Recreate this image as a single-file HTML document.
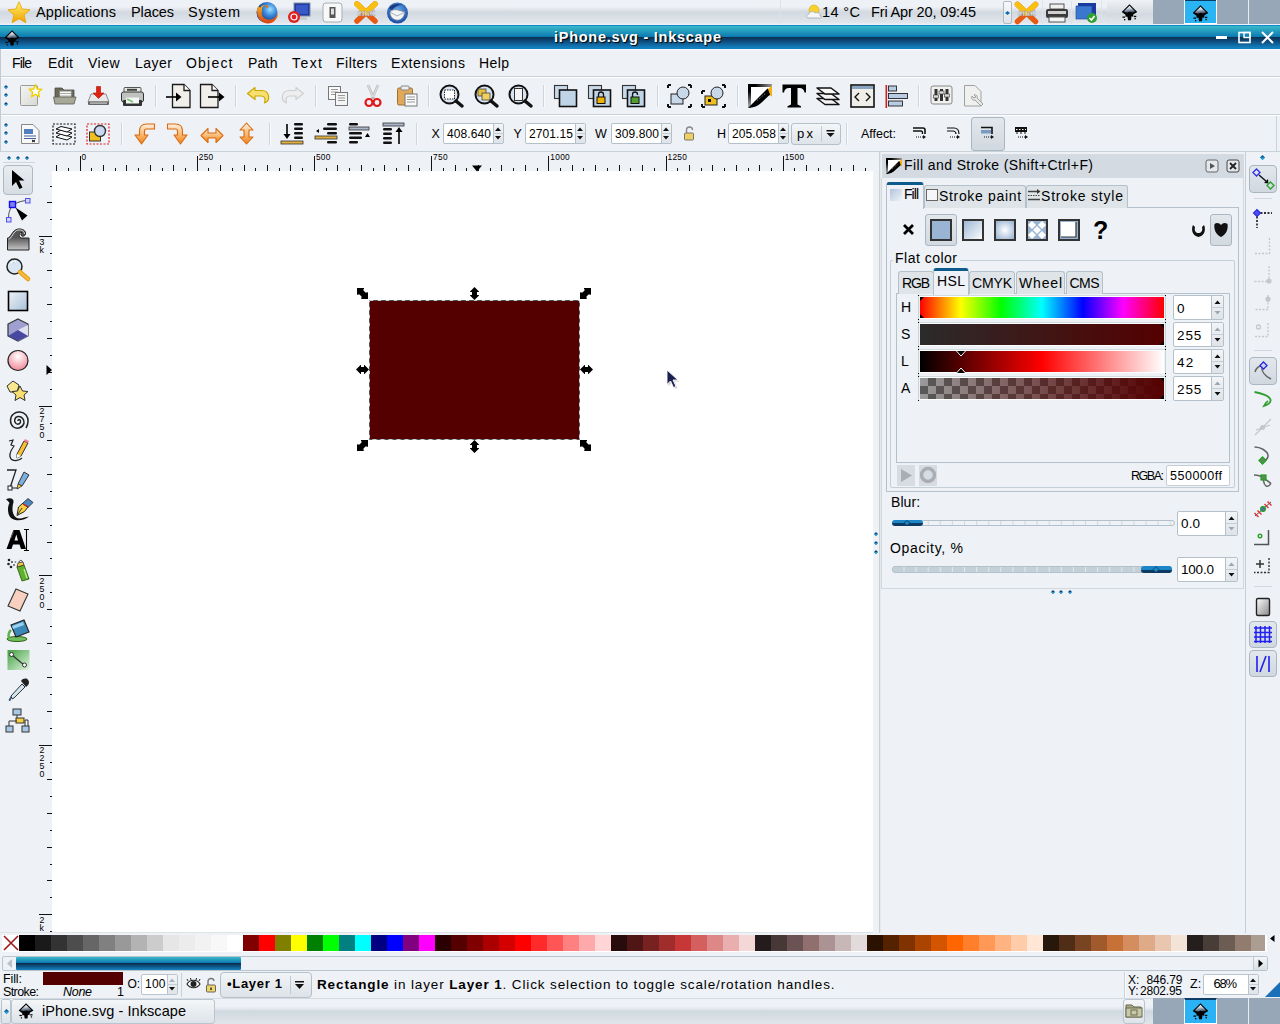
<!DOCTYPE html><html><head><meta charset="utf-8"><style>
html,body{margin:0;padding:0;width:1280px;height:1024px;overflow:hidden;background:#eef1f6}
.t{position:absolute;white-space:nowrap;font-family:"Liberation Sans",sans-serif}
svg{overflow:visible}
</style></head><body>
<div style="position:absolute;left:0;top:0;width:1280px;height:25px;background:linear-gradient(#eef1f6 0px,#eef1f6 7px,#d3d9e0 12px,#d6dce3 15px,#e0e6ec 23px,#eef1f6 24px,#eef1f6 25px)"></div>
<div style="position:absolute;left:0;top:25px;width:1280px;height:24px;background:linear-gradient(#1288cc 0px,#1288cc 1px,#3ab9c9 1px,#0b78b0 12px,#0a3050 12px,#0d4a7a 16px,#1482c2 23px,#0a7cc0 24px)"></div>
<div style="position:absolute;left:0;top:49px;width:1280px;height:27px;background:#eef1f6;border-top:1px solid #fbfbfb;box-sizing:border-box"></div>
<div style="position:absolute;left:0px;top:76px;width:1280px;height:1px;background:#c9d1d9"></div>
<div style="position:absolute;left:0px;top:77px;width:1280px;height:1px;background:#fff"></div>
<div style="position:absolute;left:0px;top:78px;width:1280px;height:36px;background:#eef1f6"></div>
<div style="position:absolute;left:0px;top:114px;width:1280px;height:1px;background:#c9d1d9"></div>
<div style="position:absolute;left:0px;top:115px;width:1280px;height:1px;background:#fff"></div>
<div style="position:absolute;left:0px;top:116px;width:1280px;height:36px;background:#eef1f6"></div>
<div style="position:absolute;left:0px;top:151px;width:1280px;height:1px;background:#c9d1d9"></div>
<div style="position:absolute;left:0px;top:49px;width:1px;height:950px;background:#c5cbd3"></div>
<div style="position:absolute;left:0px;top:152px;width:1280px;height:781px;background:#eef1f6"></div>
<div style="position:absolute;left:52px;top:171px;width:821px;height:762px;background:#fff"></div>
<div style="position:absolute;left:0px;top:933px;width:1280px;height:20px;background:#eef1f6"></div>
<div style="position:absolute;left:2px;top:935px;width:1265px;height:17px;background:#fff"></div>
<div style="position:absolute;left:0px;top:932px;width:1280px;height:1px;background:#dde4e8"></div>
<div style="position:absolute;left:19px;top:935px;width:16px;height:16px;background:#000000"></div>
<div style="position:absolute;left:35px;top:935px;width:16px;height:16px;background:#1a1a1a"></div>
<div style="position:absolute;left:51px;top:935px;width:16px;height:16px;background:#333333"></div>
<div style="position:absolute;left:67px;top:935px;width:16px;height:16px;background:#4d4d4d"></div>
<div style="position:absolute;left:83px;top:935px;width:16px;height:16px;background:#666666"></div>
<div style="position:absolute;left:99px;top:935px;width:16px;height:16px;background:#808080"></div>
<div style="position:absolute;left:115px;top:935px;width:16px;height:16px;background:#999999"></div>
<div style="position:absolute;left:131px;top:935px;width:16px;height:16px;background:#b3b3b3"></div>
<div style="position:absolute;left:147px;top:935px;width:16px;height:16px;background:#cccccc"></div>
<div style="position:absolute;left:163px;top:935px;width:16px;height:16px;background:#e6e6e6"></div>
<div style="position:absolute;left:179px;top:935px;width:16px;height:16px;background:#ececec"></div>
<div style="position:absolute;left:195px;top:935px;width:16px;height:16px;background:#f2f2f2"></div>
<div style="position:absolute;left:211px;top:935px;width:16px;height:16px;background:#f8f8f8"></div>
<div style="position:absolute;left:227px;top:935px;width:16px;height:16px;background:#ffffff"></div>
<div style="position:absolute;left:243px;top:935px;width:16px;height:16px;background:#800000"></div>
<div style="position:absolute;left:259px;top:935px;width:16px;height:16px;background:#ff0000"></div>
<div style="position:absolute;left:275px;top:935px;width:16px;height:16px;background:#808000"></div>
<div style="position:absolute;left:291px;top:935px;width:16px;height:16px;background:#ffff00"></div>
<div style="position:absolute;left:307px;top:935px;width:16px;height:16px;background:#008000"></div>
<div style="position:absolute;left:323px;top:935px;width:16px;height:16px;background:#00ff00"></div>
<div style="position:absolute;left:339px;top:935px;width:16px;height:16px;background:#008080"></div>
<div style="position:absolute;left:355px;top:935px;width:16px;height:16px;background:#00ffff"></div>
<div style="position:absolute;left:371px;top:935px;width:16px;height:16px;background:#000080"></div>
<div style="position:absolute;left:387px;top:935px;width:16px;height:16px;background:#0000ff"></div>
<div style="position:absolute;left:403px;top:935px;width:16px;height:16px;background:#800080"></div>
<div style="position:absolute;left:419px;top:935px;width:16px;height:16px;background:#ff00ff"></div>
<div style="position:absolute;left:435px;top:935px;width:16px;height:16px;background:#2b0000"></div>
<div style="position:absolute;left:451px;top:935px;width:16px;height:16px;background:#550000"></div>
<div style="position:absolute;left:467px;top:935px;width:16px;height:16px;background:#800000"></div>
<div style="position:absolute;left:483px;top:935px;width:16px;height:16px;background:#aa0000"></div>
<div style="position:absolute;left:499px;top:935px;width:16px;height:16px;background:#d40000"></div>
<div style="position:absolute;left:515px;top:935px;width:16px;height:16px;background:#ff0000"></div>
<div style="position:absolute;left:531px;top:935px;width:16px;height:16px;background:#ff2a2a"></div>
<div style="position:absolute;left:547px;top:935px;width:16px;height:16px;background:#ff5555"></div>
<div style="position:absolute;left:563px;top:935px;width:16px;height:16px;background:#ff8080"></div>
<div style="position:absolute;left:579px;top:935px;width:16px;height:16px;background:#ffaaaa"></div>
<div style="position:absolute;left:595px;top:935px;width:16px;height:16px;background:#ffd5d5"></div>
<div style="position:absolute;left:611px;top:935px;width:16px;height:16px;background:#280b0b"></div>
<div style="position:absolute;left:627px;top:935px;width:16px;height:16px;background:#501616"></div>
<div style="position:absolute;left:643px;top:935px;width:16px;height:16px;background:#782121"></div>
<div style="position:absolute;left:659px;top:935px;width:16px;height:16px;background:#a02c2c"></div>
<div style="position:absolute;left:675px;top:935px;width:16px;height:16px;background:#c83737"></div>
<div style="position:absolute;left:691px;top:935px;width:16px;height:16px;background:#d35f5f"></div>
<div style="position:absolute;left:707px;top:935px;width:16px;height:16px;background:#de8787"></div>
<div style="position:absolute;left:723px;top:935px;width:16px;height:16px;background:#e9afaf"></div>
<div style="position:absolute;left:739px;top:935px;width:16px;height:16px;background:#f4d7d7"></div>
<div style="position:absolute;left:755px;top:935px;width:16px;height:16px;background:#241c1c"></div>
<div style="position:absolute;left:771px;top:935px;width:16px;height:16px;background:#483737"></div>
<div style="position:absolute;left:787px;top:935px;width:16px;height:16px;background:#6c5353"></div>
<div style="position:absolute;left:803px;top:935px;width:16px;height:16px;background:#916f6f"></div>
<div style="position:absolute;left:819px;top:935px;width:16px;height:16px;background:#ac9393"></div>
<div style="position:absolute;left:835px;top:935px;width:16px;height:16px;background:#c8b7b7"></div>
<div style="position:absolute;left:851px;top:935px;width:16px;height:16px;background:#e3dbdb"></div>
<div style="position:absolute;left:867px;top:935px;width:16px;height:16px;background:#2b1100"></div>
<div style="position:absolute;left:883px;top:935px;width:16px;height:16px;background:#552200"></div>
<div style="position:absolute;left:899px;top:935px;width:16px;height:16px;background:#803300"></div>
<div style="position:absolute;left:915px;top:935px;width:16px;height:16px;background:#aa4400"></div>
<div style="position:absolute;left:931px;top:935px;width:16px;height:16px;background:#d45500"></div>
<div style="position:absolute;left:947px;top:935px;width:16px;height:16px;background:#ff6600"></div>
<div style="position:absolute;left:963px;top:935px;width:16px;height:16px;background:#ff7f2a"></div>
<div style="position:absolute;left:979px;top:935px;width:16px;height:16px;background:#ff9955"></div>
<div style="position:absolute;left:995px;top:935px;width:16px;height:16px;background:#ffb380"></div>
<div style="position:absolute;left:1011px;top:935px;width:16px;height:16px;background:#ffccaa"></div>
<div style="position:absolute;left:1027px;top:935px;width:16px;height:16px;background:#ffe6d5"></div>
<div style="position:absolute;left:1043px;top:935px;width:16px;height:16px;background:#28170b"></div>
<div style="position:absolute;left:1059px;top:935px;width:16px;height:16px;background:#502d16"></div>
<div style="position:absolute;left:1075px;top:935px;width:16px;height:16px;background:#784421"></div>
<div style="position:absolute;left:1091px;top:935px;width:16px;height:16px;background:#a05a2c"></div>
<div style="position:absolute;left:1107px;top:935px;width:16px;height:16px;background:#c87137"></div>
<div style="position:absolute;left:1123px;top:935px;width:16px;height:16px;background:#d38d5f"></div>
<div style="position:absolute;left:1139px;top:935px;width:16px;height:16px;background:#deaa87"></div>
<div style="position:absolute;left:1155px;top:935px;width:16px;height:16px;background:#e9c6af"></div>
<div style="position:absolute;left:1171px;top:935px;width:16px;height:16px;background:#f4e3d7"></div>
<div style="position:absolute;left:1187px;top:935px;width:16px;height:16px;background:#241f1c"></div>
<div style="position:absolute;left:1203px;top:935px;width:16px;height:16px;background:#483e37"></div>
<div style="position:absolute;left:1219px;top:935px;width:16px;height:16px;background:#6c5d53"></div>
<div style="position:absolute;left:1235px;top:935px;width:16px;height:16px;background:#917c6f"></div>
<div style="position:absolute;left:1251px;top:935px;width:14px;height:16px;background:#ac9d93"></div>
<svg style="position:absolute;left:3px;top:935px;" width="16" height="16" viewBox="0 0 16 16"><rect width="16" height="16" fill="#fff"/><path d="M1 1L15 15M15 1L1 15" stroke="#a01818" stroke-width="1.6"/></svg>
<svg style="position:absolute;left:1269px;top:934px;" width="8" height="10" viewBox="0 0 8 10"><path d="M5.5 1L1 4.5L5.5 8Z" fill="#000"/></svg>
<div style="position:absolute;left:0px;top:952px;width:1280px;height:19px;background:#eef1f6"></div>
<div style="position:absolute;left:2px;top:956px;width:1266px;height:15px;background:#eef1f6;border:1px solid #b9c5ce;box-sizing:border-box;border-radius:2px"></div>
<div style="position:absolute;left:16px;top:957px;width:225px;height:13px;background:linear-gradient(#3ab9c9,#0b78b0 45%,#0a3050 50%,#1482c2 100%);border-radius:1px"></div>
<svg style="position:absolute;left:4px;top:958px;" width="10" height="11" viewBox="0 0 10 11"><path d="M8 1L3 5.5L8 10Z" fill="#b8c2cc"/></svg>
<div style="position:absolute;left:1253px;top:957px;width:14px;height:13px;background:linear-gradient(#f4f6f8,#d8dfe5);border-left:1px solid #c0ccd4;box-sizing:border-box"></div>
<svg style="position:absolute;left:1256px;top:958px;" width="10" height="11" viewBox="0 0 10 11"><path d="M2.5 1.5L7 5.5L2.5 9.5Z" fill="#000"/></svg>
<div style="position:absolute;left:0px;top:971px;width:1280px;height:27px;background:#eef1f6"></div>
<div class="t" style="left:3.00px;top:972px;font-size:12.5px;letter-spacing:-0.109px;font-weight:normal;font-style:normal;color:#000;font-family:'Liberation Sans', sans-serif;">Fill:</div>
<div class="t" style="left:3.00px;top:985px;font-size:12.5px;letter-spacing:-0.604px;font-weight:normal;font-style:normal;color:#000;font-family:'Liberation Sans', sans-serif;">Stroke:</div>
<div style="position:absolute;left:43px;top:972px;width:80px;height:13px;background:#550000"></div>
<div class="t" style="left:63.00px;top:985px;font-size:12.5px;letter-spacing:-0.292px;font-weight:normal;font-style:italic;color:#000;font-family:'Liberation Sans', sans-serif;">None</div>
<div class="t" style="left:117.00px;top:985px;font-size:12.5px;letter-spacing:0.000px;font-weight:normal;font-style:normal;color:#000;font-family:'Liberation Sans', sans-serif;">1</div>
<div class="t" style="left:127.50px;top:977px;font-size:12px;letter-spacing:0.000px;font-weight:normal;font-style:normal;color:#000;font-family:'Liberation Sans', sans-serif;">O:</div>
<div style="position:absolute;left:141px;top:974px;width:37px;height:21px;background:#fff;border:1px solid #b9c5ce;box-sizing:border-box;border-radius:2px"></div>
<div style="position:absolute;left:167px;top:975px;width:10px;height:19px;background:linear-gradient(#f2f4f6,#dfe4e9);border-left:1px solid #b9c5ce;box-sizing:border-box"></div>
<svg style="position:absolute;left:167px;top:975px;" width="10" height="19" viewBox="0 0 10 19"><path d="M2 7L5 3.5L8 7Z" fill="#a8b4be"/><path d="M2 12L5 15.5L8 12Z" fill="#111"/><path d="M0 9.5H10" stroke="#c4ced6"/></svg>
<div class="t" style="left:145.00px;top:977px;font-size:12px;letter-spacing:0.230px;font-weight:normal;font-style:normal;color:#000;font-family:'Liberation Sans', sans-serif;">100</div>
<div style="position:absolute;left:181px;top:973px;width:1px;height:24px;background:#c9d1d9"></div>
<svg style="position:absolute;left:186px;top:978px;" width="15" height="12" viewBox="0 0 15 12"><path d="M1 6C4 1 11 1 14 6C11 11 4 11 1 6Z" fill="#fff" stroke="#222" stroke-width="1.2"/><circle cx="7.5" cy="6" r="3" fill="#222"/><path d="M2 3L1 1M5 2L4.5 0M10 2L10.5 0M13 3L14 1" stroke="#222"/></svg>
<svg style="position:absolute;left:205px;top:977px;" width="12" height="16" viewBox="0 0 12 16"><path d="M3 8V5A3 3 0 0 1 9 4" fill="none" stroke="#777" stroke-width="1.4"/><rect x="1.5" y="8" width="9" height="7" rx="1" fill="#f0d860" stroke="#666"/><rect x="5" y="10.5" width="2" height="2.5" fill="#555"/></svg>
<div style="position:absolute;left:220px;top:972px;width:92px;height:26px;background:linear-gradient(#f2f5f7,#dce2e8);border:1px solid #b4c0ca;box-sizing:border-box;border-radius:4px"></div>
<div style="position:absolute;left:290px;top:976px;width:1px;height:18px;background:#c0cad2"></div>
<svg style="position:absolute;left:294px;top:979px;" width="12" height="12" viewBox="0 0 12 12"><rect x="1" y="2" width="9" height="1.5" fill="#111"/><path d="M1 5H10L5.5 10Z" fill="#111"/></svg>
<div class="t" style="left:227.00px;top:976px;font-size:13px;letter-spacing:0.698px;font-weight:bold;font-style:normal;color:#000;font-family:'Liberation Sans', sans-serif;">&#8226;Layer 1</div>
<div class="t" style="left:317.00px;top:977px;font-size:13.5px;letter-spacing:0.875px;color:#000;"><span style="font-weight:bold">Rectangle</span> in layer <span style="font-weight:bold">Layer 1</span>. Click selection to toggle scale/rotation handles.</div>
<div style="position:absolute;left:1124px;top:972px;width:1px;height:26px;background:#c9d1d9"></div>
<div style="position:absolute;left:1125px;top:972px;width:1px;height:26px;background:#fafbfc"></div>
<div class="t" style="left:1128.00px;top:973px;font-size:12px;letter-spacing:0.000px;font-weight:normal;font-style:normal;color:#000;font-family:'Liberation Sans', sans-serif;">X:</div>
<div class="t" style="left:1146.50px;top:973px;font-size:12px;letter-spacing:-0.144px;font-weight:normal;font-style:normal;color:#000;font-family:'Liberation Sans', sans-serif;">846.79</div>
<div class="t" style="left:1128.00px;top:984px;font-size:12px;letter-spacing:0.000px;font-weight:normal;font-style:normal;color:#000;font-family:'Liberation Sans', sans-serif;">Y:</div>
<div class="t" style="left:1140.00px;top:984px;font-size:12px;letter-spacing:-0.230px;font-weight:normal;font-style:normal;color:#000;font-family:'Liberation Sans', sans-serif;">2802.95</div>
<div class="t" style="left:1190.00px;top:977px;font-size:12.5px;letter-spacing:0.000px;font-weight:normal;font-style:normal;color:#000;font-family:'Liberation Sans', sans-serif;">Z:</div>
<div style="position:absolute;left:1203px;top:974px;width:56px;height:21px;background:#fff;border:1px solid #b9c5ce;box-sizing:border-box;border-radius:2px"></div>
<div style="position:absolute;left:1248px;top:975px;width:10px;height:19px;background:linear-gradient(#f2f4f6,#dfe4e9);border-left:1px solid #b9c5ce;box-sizing:border-box"></div>
<svg style="position:absolute;left:1248px;top:975px;" width="10" height="19" viewBox="0 0 10 19"><path d="M2 7L5 3.5L8 7Z" fill="#111"/><path d="M2 12L5 15.5L8 12Z" fill="#111"/><path d="M0 9.5H10" stroke="#c4ced6"/></svg>
<div class="t" style="left:1213.50px;top:976px;font-size:13px;letter-spacing:-1.250px;font-weight:normal;font-style:normal;color:#000;font-family:'Liberation Sans', sans-serif;">68%</div>
<svg style="position:absolute;left:1264px;top:982px;" width="16" height="16" viewBox="0 0 16 16"><path d="M16 0L16 15L1 15Z" fill="#1a70b8"/></svg>
<div style="position:absolute;left:0;top:998px;width:1280px;height:26px;background:linear-gradient(#d3dae1 0px,#d3dae1 1px,#eef1f6 1px,#eef1f6 8px,#e4e8ee 11px,#d0d9e0 13px,#d6dde4 18px,#dfe5eb 26px)"></div>
<div style="position:absolute;left:1px;top:999px;width:10px;height:25px;background:linear-gradient(#f4f6f8,#dde3e9);border:1px solid #b9c5ce;box-sizing:border-box;border-radius:2px"></div>
<svg style="position:absolute;left:4px;top:1009px;" width="5" height="5" viewBox="0 0 5 5"><path d="M2.5 0L5 2.5L2.5 5L0 2.5Z" fill="#0a5a90"/><path d="M0.5 2.5L5 2.5L2.5 5Z" fill="#22a8e0"/></svg>
<div style="position:absolute;left:11px;top:999px;width:204px;height:25px;background:linear-gradient(#f4f6f8,#dde3e9);border:1px solid #b9c5ce;box-sizing:border-box;border-radius:3px"></div>
<div class="t" style="left:42.00px;top:1003px;font-size:14.5px;letter-spacing:0.066px;font-weight:normal;font-style:normal;color:#000;font-family:'Liberation Sans', sans-serif;">iPhone.svg - Inkscape</div>
<div style="position:absolute;left:1123px;top:999px;width:22px;height:25px;background:linear-gradient(#f4f6f8,#dde3e9);border:1px solid #b9c5ce;box-sizing:border-box;border-radius:3px"></div>
<svg style="position:absolute;left:1125px;top:1003px;" width="18" height="16" viewBox="0 0 18 16"><path d="M1 2H7L9 4H16V14H1Z" fill="#a8a88a" stroke="#6a6a50"/><rect x="1" y="5" width="16" height="9" fill="#c8c8a8" stroke="#6a6a50"/><rect x="6" y="7" width="6" height="5" fill="none" stroke="#6a6a50"/></svg>
<div style="position:absolute;left:1153px;top:998px;width:127px;height:26px;background:#97a7b8"></div>
<div style="position:absolute;left:1184px;top:998px;width:33px;height:26px;background:#2ab2f4;border:1px solid #fff;border-top:2px solid #0c3c68;box-sizing:border-box"></div>
<div style="position:absolute;left:1248px;top:998px;width:1px;height:26px;background:#e8ecf0"></div>
<svg style="position:absolute;left:7px;top:1px;" width="24" height="24" viewBox="0 0 24 24"><defs><linearGradient id="stg" x1="0" y1="0" x2="0" y2="1"><stop offset="0" stop-color="#fff36a"/><stop offset="1" stop-color="#f0a000"/></linearGradient></defs><path d="M12 0.8L15.2 8L23 8.8L17.1 13.9L18.9 21.8L12 17.7L5.1 21.8L6.9 13.9L1 8.8L8.8 8Z" fill="url(#stg)" stroke="#e8a000" stroke-width="0.8"/></svg>
<div class="t" style="left:36.00px;top:4px;font-size:14.5px;letter-spacing:0.168px;font-weight:normal;font-style:normal;color:#000;font-family:'Liberation Sans', sans-serif;">Applications</div>
<div class="t" style="left:131.00px;top:4px;font-size:14.5px;letter-spacing:-0.100px;font-weight:normal;font-style:normal;color:#000;font-family:'Liberation Sans', sans-serif;">Places</div>
<div class="t" style="left:188.00px;top:4px;font-size:14.5px;letter-spacing:0.728px;font-weight:normal;font-style:normal;color:#000;font-family:'Liberation Sans', sans-serif;">System</div>
<svg style="position:absolute;left:255px;top:1px;" width="24" height="23" viewBox="0 0 24 23"><defs><radialGradient id="ffg" cx="0.65" cy="0.35" r="0.6"><stop offset="0" stop-color="#a0e0ff"/><stop offset="0.5" stop-color="#3a88d8"/><stop offset="1" stop-color="#1a3a90"/></radialGradient><linearGradient id="ffo" x1="0" y1="0" x2="0" y2="1"><stop offset="0" stop-color="#f8b020"/><stop offset="1" stop-color="#d84010"/></linearGradient></defs><circle cx="12" cy="11.5" r="10.5" fill="url(#ffg)"/><path d="M3 5C0.5 12 3 21 12 22.5C19 23 23 17 23 12C21 17 17 19.5 12.5 18.5C7.5 17.5 6 13 7 10C6.5 7 8 5 10 4C8 4 6 5 5 7C4.5 6 4 5.5 3 5Z" fill="url(#ffo)"/><path d="M10 4C12 3.5 14 5 13 7C11 7 10.5 5.5 10 4Z" fill="#f07010"/></svg>
<svg style="position:absolute;left:286px;top:2px;" width="26" height="22" viewBox="0 0 26 22"><rect x="8" y="1" width="16" height="13" fill="#2038a0" stroke="#8090a8"/><rect x="10" y="3" width="12" height="9" fill="#3858c8"/><rect x="13" y="15" width="8" height="3" fill="#c8ccd0"/><circle cx="8" cy="15" r="6" fill="#e02020"/><circle cx="8" cy="15" r="3" fill="none" stroke="#fff" stroke-width="1.2"/></svg>
<svg style="position:absolute;left:322px;top:2px;" width="22" height="21" viewBox="0 0 22 21"><rect x="1" y="1" width="19" height="19" rx="3" fill="#f8f8f8" stroke="#a8aeb4"/><rect x="7.5" y="5" width="6" height="11" fill="#555"/><rect x="9" y="6.5" width="3" height="6" fill="#ddd"/></svg>
<svg style="position:absolute;left:354px;top:1px;" width="24" height="23" viewBox="0 0 24 23"><path d="M3 3L21 20M21 3L3 20" stroke="#e85a10" stroke-width="5.5" stroke-linecap="round"/><path d="M3 3L12 11.5M21 3L12 11.5" stroke="#f8c010" stroke-width="5.5" stroke-linecap="round"/><text x="12" y="14.5" font-family="Liberation Sans" font-size="8.5" font-weight="bold" text-anchor="middle" fill="#fff" stroke="#888" stroke-width="0.4">cnat</text></svg>
<svg style="position:absolute;left:386px;top:1px;" width="23" height="23" viewBox="0 0 23 23"><defs><radialGradient id="tbg" cx="0.5" cy="0.4" r="0.6"><stop offset="0" stop-color="#6ab0f0"/><stop offset="1" stop-color="#1a4aa0"/></radialGradient></defs><circle cx="11.5" cy="12" r="10.5" fill="url(#tbg)"/><path d="M4 11C5 9 9 8 12 9L19 11C18 17 14 20 10 19C6 18 4 15 4 11Z" fill="#f4f4f4" stroke="#6a7a90" stroke-width="0.7"/><path d="M4 11L11 15L19 11" stroke="#8a9ab0" stroke-width="0.8" fill="none"/><path d="M3 7C6 3 12 2 16 4C12 4 8 6 6 9Z" fill="#1a3a80"/></svg>
<div style="position:absolute;left:780px;top:0px;width:1px;height:24px;background:#dde2e8"></div>
<svg style="position:absolute;left:806px;top:3px;" width="17" height="17" viewBox="0 0 17 17"><circle cx="8" cy="7" r="5" fill="#f8d030" stroke="#d0a000" stroke-width="0.5"/><path d="M2 15C0 15 0 11 3 11C3 8 8 8 9 10C11 9 15 10 14 13C16 13 16 15 14 15Z" fill="#f4f6f8" stroke="#a0a8b0" stroke-width="0.8"/></svg>
<div class="t" style="left:822.00px;top:4px;font-size:14.5px;letter-spacing:0.401px;font-weight:normal;font-style:normal;color:#000;font-family:'Liberation Sans', sans-serif;">14 °C</div>
<div class="t" style="left:871.00px;top:4px;font-size:14.5px;letter-spacing:-0.139px;font-weight:normal;font-style:normal;color:#000;font-family:'Liberation Sans', sans-serif;">Fri Apr 20, 09:45</div>
<div style="position:absolute;left:1003px;top:1px;width:9px;height:23px;background:linear-gradient(#f8f9fa,#dfe3e8);border:1px solid #b0b8c0;box-sizing:border-box;border-radius:2px"></div>
<svg style="position:absolute;left:1005px;top:11px;" width="5" height="4" viewBox="0 0 5 4"><path d="M2.5 0L5 2L2.5 4L0 2Z" fill="#0870b0"/></svg>
<svg style="position:absolute;left:1014px;top:1px;" width="25" height="24" viewBox="0 0 25 24"><path d="M3.5 3.5L21.5 20.5M21.5 3.5L3.5 20.5" stroke="#e85a10" stroke-width="5.5" stroke-linecap="round"/><path d="M3.5 3.5L12.5 12M21.5 3.5L12.5 12" stroke="#f8c010" stroke-width="5.5" stroke-linecap="round"/><text x="12.5" y="15" font-family="Liberation Sans" font-size="8.5" font-weight="bold" text-anchor="middle" fill="#fff" stroke="#888" stroke-width="0.4">cnat</text></svg>
<div style="position:absolute;left:1042px;top:1px;width:1px;height:23px;background:#dde2e8"></div>
<svg style="position:absolute;left:1045px;top:3px;" width="24" height="20" viewBox="0 0 24 20"><rect x="5" y="1" width="14" height="5" fill="#f0f0f0" stroke="#555"/><rect x="1" y="6" width="22" height="9" rx="2" fill="#3a3a3a"/><rect x="3" y="8" width="18" height="3" fill="#d0d0d0"/><rect x="4" y="14" width="16" height="5" fill="#f4f4f4" stroke="#555"/></svg>
<div style="position:absolute;left:1071px;top:1px;width:1px;height:23px;background:#dde2e8"></div>
<svg style="position:absolute;left:1075px;top:2px;" width="24" height="21" viewBox="0 0 24 21"><rect x="3" y="1" width="18" height="14" fill="#1a3aa0"/><rect x="1" y="4" width="16" height="13" fill="#3a78d0" stroke="#2040a0" stroke-width="0.6"/><circle cx="17" cy="16" r="5" fill="#30a030"/><path d="M14.5 16L16.5 18L19.5 14" stroke="#fff" stroke-width="1.6" fill="none"/></svg>
<div style="position:absolute;left:1101px;top:1px;width:1px;height:23px;background:#dde2e8"></div>
<div style="position:absolute;left:1107px;top:0px;width:46px;height:24px;background:linear-gradient(#f0f2f5,#d3d9e0 60%,#e2e7ec)"></div>
<svg style="position:absolute;left:1121px;top:4px;" width="18" height="18" viewBox="0 0 18 18"><defs><linearGradient id="ikg1121_4" x1="0" y1="0" x2="0.2" y2="1"><stop offset="0" stop-color="#fff"/><stop offset="0.45" stop-color="#c8d0dc"/><stop offset="1" stop-color="#3a4a60"/></linearGradient></defs><g transform="scale(1.0)"><path d="M8.5 0.3L16.3 8L12.5 10.3L12 12.8L10.5 12.3L10 16.3L7 16.3L6.5 12.8L4.5 12.8L4.5 10.8L0.7 8Z" fill="#000"/><path d="M8.5 1.8L14.3 7.6L11 8.6L8.5 7.8L6 8.8L2.7 7.6Z" fill="url(#ikg1121_4)"/><rect x="1.5" y="12.5" width="2.5" height="1.3" fill="#000"/><rect x="12.8" y="11.8" width="2.5" height="1.3" fill="#000"/><rect x="13.5" y="14" width="1.3" height="1.3" fill="#000"/><rect x="3" y="15" width="1.3" height="1.3" fill="#000"/></g></svg>
<div style="position:absolute;left:1184px;top:0px;width:33px;height:24px;background:#2ab4f4;border:1px solid #fff;box-sizing:border-box"></div>
<div style="position:absolute;left:1185px;top:0px;width:31px;height:1px;background:#0c3c68"></div>
<div style="position:absolute;left:1153px;top:0px;width:31px;height:24px;background:#97a7b8"></div>
<div style="position:absolute;left:1217px;top:0px;width:63px;height:24px;background:#97a7b8"></div>
<div style="position:absolute;left:1248px;top:0px;width:1px;height:24px;background:#e8ecf0"></div>
<svg style="position:absolute;left:1192px;top:5px;" width="18" height="18" viewBox="0 0 18 18"><defs><linearGradient id="ikg1192_5" x1="0" y1="0" x2="0.2" y2="1"><stop offset="0" stop-color="#fff"/><stop offset="0.45" stop-color="#c8d0dc"/><stop offset="1" stop-color="#3a4a60"/></linearGradient></defs><g transform="scale(1.0)"><path d="M8.5 0.3L16.3 8L12.5 10.3L12 12.8L10.5 12.3L10 16.3L7 16.3L6.5 12.8L4.5 12.8L4.5 10.8L0.7 8Z" fill="#000"/><path d="M8.5 1.8L14.3 7.6L11 8.6L8.5 7.8L6 8.8L2.7 7.6Z" fill="url(#ikg1192_5)"/><rect x="1.5" y="12.5" width="2.5" height="1.3" fill="#000"/><rect x="12.8" y="11.8" width="2.5" height="1.3" fill="#000"/><rect x="13.5" y="14" width="1.3" height="1.3" fill="#000"/><rect x="3" y="15" width="1.3" height="1.3" fill="#000"/></g></svg>
<svg style="position:absolute;left:4px;top:30px;" width="17" height="17" viewBox="0 0 17 17"><defs><linearGradient id="ikg4_30" x1="0" y1="0" x2="0.2" y2="1"><stop offset="0" stop-color="#fff"/><stop offset="0.45" stop-color="#c8d0dc"/><stop offset="1" stop-color="#3a4a60"/></linearGradient></defs><g transform="scale(0.95)"><path d="M8.5 0.3L16.3 8L12.5 10.3L12 12.8L10.5 12.3L10 16.3L7 16.3L6.5 12.8L4.5 12.8L4.5 10.8L0.7 8Z" fill="#000"/><path d="M8.5 1.8L14.3 7.6L11 8.6L8.5 7.8L6 8.8L2.7 7.6Z" fill="url(#ikg4_30)"/><rect x="1.5" y="12.5" width="2.5" height="1.3" fill="#000"/><rect x="12.8" y="11.8" width="2.5" height="1.3" fill="#000"/><rect x="13.5" y="14" width="1.3" height="1.3" fill="#000"/><rect x="3" y="15" width="1.3" height="1.3" fill="#000"/></g></svg>
<div class="t" style="left:554.00px;top:29px;font-size:14.5px;letter-spacing:0.734px;font-weight:bold;font-style:normal;color:#fff;font-family:'Liberation Sans', sans-serif;text-shadow:1px 1px 1px #000">iPhone.svg - Inkscape</div>
<svg style="position:absolute;left:1214px;top:33px;" width="16" height="10" viewBox="0 0 16 10"><rect x="2" y="3" width="11" height="3" fill="#fff"/></svg>
<svg style="position:absolute;left:1237px;top:30px;" width="16" height="16" viewBox="0 0 16 16"><rect x="2" y="2.5" width="11" height="10" fill="none" stroke="#fff" stroke-width="1.6"/><rect x="7" y="2.5" width="6" height="5" fill="none" stroke="#fff" stroke-width="1.4"/></svg>
<svg style="position:absolute;left:1260px;top:30px;" width="16" height="16" viewBox="0 0 16 16"><path d="M2 2L13 13M13 2L2 13" stroke="#fff" stroke-width="2"/></svg>
<div class="t" style="left:12.00px;top:55px;font-size:14px;letter-spacing:-0.847px;font-weight:normal;font-style:normal;color:#000;font-family:'Liberation Sans', sans-serif;">File</div>
<div class="t" style="left:48.00px;top:55px;font-size:14px;letter-spacing:0.283px;font-weight:normal;font-style:normal;color:#000;font-family:'Liberation Sans', sans-serif;">Edit</div>
<div class="t" style="left:88.00px;top:55px;font-size:14px;letter-spacing:0.467px;font-weight:normal;font-style:normal;color:#000;font-family:'Liberation Sans', sans-serif;">View</div>
<div class="t" style="left:135.00px;top:55px;font-size:14px;letter-spacing:0.500px;font-weight:normal;font-style:normal;color:#000;font-family:'Liberation Sans', sans-serif;">Layer</div>
<div class="t" style="left:186.00px;top:55px;font-size:14px;letter-spacing:1.208px;font-weight:normal;font-style:normal;color:#000;font-family:'Liberation Sans', sans-serif;">Object</div>
<div class="t" style="left:248.00px;top:55px;font-size:14px;letter-spacing:0.243px;font-weight:normal;font-style:normal;color:#000;font-family:'Liberation Sans', sans-serif;">Path</div>
<div class="t" style="left:292.00px;top:55px;font-size:14px;letter-spacing:1.437px;font-weight:normal;font-style:normal;color:#000;font-family:'Liberation Sans', sans-serif;">Text</div>
<div class="t" style="left:336.00px;top:55px;font-size:14px;letter-spacing:0.487px;font-weight:normal;font-style:normal;color:#000;font-family:'Liberation Sans', sans-serif;">Filters</div>
<div class="t" style="left:391.00px;top:55px;font-size:14px;letter-spacing:0.616px;font-weight:normal;font-style:normal;color:#000;font-family:'Liberation Sans', sans-serif;">Extensions</div>
<div class="t" style="left:479.00px;top:55px;font-size:14px;letter-spacing:0.410px;font-weight:normal;font-style:normal;color:#000;font-family:'Liberation Sans', sans-serif;">Help</div>
<svg style="position:absolute;left:18px;top:1003px;" width="17" height="17" viewBox="0 0 17 17"><defs><linearGradient id="ikg18_1003" x1="0" y1="0" x2="0.2" y2="1"><stop offset="0" stop-color="#fff"/><stop offset="0.45" stop-color="#c8d0dc"/><stop offset="1" stop-color="#3a4a60"/></linearGradient></defs><g transform="scale(0.95)"><path d="M8.5 0.3L16.3 8L12.5 10.3L12 12.8L10.5 12.3L10 16.3L7 16.3L6.5 12.8L4.5 12.8L4.5 10.8L0.7 8Z" fill="#000"/><path d="M8.5 1.8L14.3 7.6L11 8.6L8.5 7.8L6 8.8L2.7 7.6Z" fill="url(#ikg18_1003)"/><rect x="1.5" y="12.5" width="2.5" height="1.3" fill="#000"/><rect x="12.8" y="11.8" width="2.5" height="1.3" fill="#000"/><rect x="13.5" y="14" width="1.3" height="1.3" fill="#000"/><rect x="3" y="15" width="1.3" height="1.3" fill="#000"/></g></svg>
<svg style="position:absolute;left:1192px;top:1003px;" width="18" height="18" viewBox="0 0 18 18"><defs><linearGradient id="ikg1192_1003" x1="0" y1="0" x2="0.2" y2="1"><stop offset="0" stop-color="#fff"/><stop offset="0.45" stop-color="#c8d0dc"/><stop offset="1" stop-color="#3a4a60"/></linearGradient></defs><g transform="scale(1.0)"><path d="M8.5 0.3L16.3 8L12.5 10.3L12 12.8L10.5 12.3L10 16.3L7 16.3L6.5 12.8L4.5 12.8L4.5 10.8L0.7 8Z" fill="#000"/><path d="M8.5 1.8L14.3 7.6L11 8.6L8.5 7.8L6 8.8L2.7 7.6Z" fill="url(#ikg1192_1003)"/><rect x="1.5" y="12.5" width="2.5" height="1.3" fill="#000"/><rect x="12.8" y="11.8" width="2.5" height="1.3" fill="#000"/><rect x="13.5" y="14" width="1.3" height="1.3" fill="#000"/><rect x="3" y="15" width="1.3" height="1.3" fill="#000"/></g></svg>
<svg style="position:absolute;left:4px;top:85px;" width="4" height="4" viewBox="0 0 4 4"><path d="M2 0L4 2L2 4L0 2Z" fill="#0a4a80"/><path d="M0.3 2.2H3.7L2 4Z" fill="#30b0e8"/></svg>
<svg style="position:absolute;left:4px;top:93px;" width="4" height="4" viewBox="0 0 4 4"><path d="M2 0L4 2L2 4L0 2Z" fill="#0a4a80"/><path d="M0.3 2.2H3.7L2 4Z" fill="#30b0e8"/></svg>
<svg style="position:absolute;left:4px;top:102px;" width="4" height="4" viewBox="0 0 4 4"><path d="M2 0L4 2L2 4L0 2Z" fill="#0a4a80"/><path d="M0.3 2.2H3.7L2 4Z" fill="#30b0e8"/></svg>
<svg style="position:absolute;left:20px;top:84px;" width="22" height="24" viewBox="0 0 22 24"><defs><linearGradient id="pg" x1="0" y1="0" x2="1" y2="1"><stop offset="0" stop-color="#f4f4f2"/><stop offset="1" stop-color="#d8d8d4"/></linearGradient></defs><rect x="0.5" y="1.5" width="17" height="20" rx="1" fill="url(#pg)" stroke="#9a9a98"/><path d="M15.5 1L17.3 5L21.5 5.4L18.4 8.3L19.2 12.5L15.5 10.4L11.8 12.5L12.6 8.3L9.5 5.4L13.7 5Z" fill="#fff" stroke="#f0d000" stroke-width="1.4"/></svg>
<svg style="position:absolute;left:53px;top:86px;" width="24" height="20" viewBox="0 0 24 20"><path d="M2 2L9 2L11 4L21 4L21 16L2 16Z" fill="#6a6a5a" stroke="#4a4a40" stroke-width="0.8"/><rect x="6.5" y="5" width="12" height="8" fill="#f8f8f4" stroke="#888"/><path d="M7 7.5H18M7 10H18" stroke="#aaa"/><path d="M0.5 11L23 11L21 18L2 18Z" fill="#a8a898" stroke="#5a5a50" stroke-width="0.8"/></svg>
<svg style="position:absolute;left:87px;top:86px;" width="23" height="20" viewBox="0 0 23 20"><path d="M4 8L19 8L22 16L1 16Z" fill="#e8e8e8" stroke="#777" stroke-width="0.8"/><rect x="1" y="15.5" width="21" height="3.5" rx="1" fill="#666"/><rect x="3" y="16.5" width="17" height="1.2" fill="#ccc"/><path d="M9.5 0.5H13.5V7H17L11.5 12.5L6 7H9.5Z" fill="#e02010" stroke="#b01000" stroke-width="0.6"/></svg>
<svg style="position:absolute;left:121px;top:87px;" width="23" height="20" viewBox="0 0 23 20"><rect x="3" y="0.5" width="17" height="5" rx="1" fill="#e8e8e4" stroke="#555"/><rect x="6" y="1.8" width="10" height="2" fill="#444"/><rect x="0.5" y="5" width="22" height="10" rx="2" fill="#bfc2bf" stroke="#333"/><rect x="2" y="13" width="19" height="6" rx="1" fill="#333"/><rect x="5" y="10.5" width="13" height="6" fill="#f4f8f4"/><path d="M6 12L12 15" stroke="#7ac070" stroke-width="1.5"/></svg>
<div style="position:absolute;left:155px;top:85px;width:1px;height:22px;background:#cdd5dd"></div>
<div style="position:absolute;left:156px;top:85px;width:1px;height:22px;background:#fafbfc"></div>
<svg style="position:absolute;left:165px;top:83px;" width="27" height="26" viewBox="0 0 27 26"><path d="M7.5 1.5H19L25 7.5V24.5H7.5Z" fill="#f0efea" stroke="#1a1a1a" stroke-width="1.3"/><path d="M19 1.5V7.5H25" fill="#fff" stroke="#1a1a1a" stroke-width="1.3"/><path d="M1 14H13" stroke="#000" stroke-width="1.6"/><path d="M11 9.5L16.5 14L11 18.5Z" fill="#000"/></svg>
<svg style="position:absolute;left:199px;top:83px;" width="27" height="26" viewBox="0 0 27 26"><path d="M1.5 1.5H13L19 7.5V24.5H1.5Z" fill="#f0efea" stroke="#1a1a1a" stroke-width="1.3"/><path d="M13 1.5V7.5H19" fill="#fff" stroke="#1a1a1a" stroke-width="1.3"/><path d="M9 14H21" stroke="#000" stroke-width="1.6"/><path d="M20 9.5L25.5 14L20 18.5Z" fill="#000"/></svg>
<div style="position:absolute;left:235px;top:85px;width:1px;height:22px;background:#cdd5dd"></div>
<div style="position:absolute;left:236px;top:85px;width:1px;height:22px;background:#fafbfc"></div>
<svg style="position:absolute;left:246px;top:86px;" width="24" height="20" viewBox="0 0 24 20"><path d="M9 1.5L1.5 7.5L9 13.5V10H15C18 10 19.5 12 19 15L18.5 17C21.5 16 23 13 22.5 10C22 6.5 19 4.5 15.5 4.5H9Z" fill="#f8e070" stroke="#c8a800" stroke-width="1.2" stroke-linejoin="round"/></svg>
<svg style="position:absolute;left:281px;top:86px;" width="24" height="20" viewBox="0 0 24 20"><path d="M15 1.5L22.5 7.5L15 13.5V10H9C6 10 4.5 12 5 15L5.5 17C2.5 16 1 13 1.5 10C2 6.5 5 4.5 8.5 4.5H15Z" fill="#eeeeee" stroke="#cfcfcf" stroke-width="1.2" stroke-linejoin="round"/></svg>
<div style="position:absolute;left:315px;top:85px;width:1px;height:22px;background:#cdd5dd"></div>
<div style="position:absolute;left:316px;top:85px;width:1px;height:22px;background:#fafbfc"></div>
<svg style="position:absolute;left:327px;top:85px;" width="23" height="22" viewBox="0 0 23 22"><rect x="1.5" y="1.5" width="12" height="13" fill="#fafafa" stroke="#777"/><path d="M4 4.5H11M4 7H11M4 9.5H11" stroke="#999"/><rect x="8.5" y="7.5" width="12" height="13" fill="#f4f4f4" stroke="#777"/><path d="M11 10.5H18M11 13H18M11 15.5H18" stroke="#999"/></svg>
<svg style="position:absolute;left:362px;top:84px;" width="22" height="24" viewBox="0 0 22 24"><path d="M6 1L12 15M16 1L10 15" stroke="#b8b8b8" stroke-width="2.5"/><path d="M6 1L11 13M16 1L11 13" stroke="#e8e8e8" stroke-width="1"/><circle cx="7" cy="18.5" r="3.5" fill="none" stroke="#e01818" stroke-width="2.2"/><circle cx="15" cy="18.5" r="3.5" fill="none" stroke="#e01818" stroke-width="2.2"/></svg>
<svg style="position:absolute;left:396px;top:85px;" width="23" height="23" viewBox="0 0 23 23"><rect x="1.5" y="3" width="15" height="17" rx="1.5" fill="#e0a858" stroke="#a07030"/><rect x="5" y="1" width="8" height="4" rx="1" fill="#eee" stroke="#888"/><rect x="9" y="9" width="12" height="12" fill="#fafafa" stroke="#777"/><path d="M11 12H19M11 14.5H19M11 17H19" stroke="#999"/></svg>
<div style="position:absolute;left:428px;top:85px;width:1px;height:22px;background:#cdd5dd"></div>
<div style="position:absolute;left:429px;top:85px;width:1px;height:22px;background:#fafbfc"></div>
<svg style="position:absolute;left:439px;top:84px;" width="25" height="24" viewBox="0 0 25 24"><circle cx="10.5" cy="10.5" r="9" fill="#d8e4f0" stroke="#111" stroke-width="2"/><rect x="5.5" y="6" width="10" height="9" fill="#fff" stroke="#222" stroke-width="1" stroke-dasharray="1.5 1"/><path d="M17 17L23 22" stroke="#111" stroke-width="3.5" stroke-linecap="round"/></svg>
<svg style="position:absolute;left:474px;top:84px;" width="25" height="24" viewBox="0 0 25 24"><circle cx="10.5" cy="10.5" r="9" fill="#d8e4f0" stroke="#111" stroke-width="2"/><rect x="4" y="5" width="8" height="7" fill="#e8c040" stroke="#444" stroke-width="0.8"/><rect x="8" y="9" width="8" height="7" fill="#f0d060" stroke="#444" stroke-width="0.8"/><path d="M17 17L23 22" stroke="#111" stroke-width="3.5" stroke-linecap="round"/></svg>
<svg style="position:absolute;left:508px;top:84px;" width="25" height="24" viewBox="0 0 25 24"><circle cx="10.5" cy="10.5" r="9" fill="#d8e4f0" stroke="#111" stroke-width="2"/><rect x="6.5" y="4.5" width="8" height="12" fill="#f4f4f4" stroke="#333" stroke-width="1"/><path d="M17 17L23 22" stroke="#111" stroke-width="3.5" stroke-linecap="round"/></svg>
<div style="position:absolute;left:543px;top:85px;width:1px;height:22px;background:#cdd5dd"></div>
<div style="position:absolute;left:544px;top:85px;width:1px;height:22px;background:#fafbfc"></div>
<svg style="position:absolute;left:553px;top:84px;" width="25" height="24" viewBox="0 0 25 24"><rect x="1.5" y="1.5" width="13" height="13" fill="#c8d8e8" stroke="#333" stroke-width="1.1"/><rect x="6.5" y="6" width="17" height="16.5" fill="#c0d4e8" stroke="#111" stroke-width="1.6"/></svg>
<svg style="position:absolute;left:587px;top:84px;" width="25" height="24" viewBox="0 0 25 24"><rect x="1.5" y="1.5" width="13" height="13" fill="#c8d8e8" stroke="#333" stroke-width="1.1"/><rect x="6.5" y="6" width="17" height="16.5" fill="#c0d4e8" stroke="#111" stroke-width="1.6"/><rect x="10" y="13" width="8" height="6.5" fill="#f0b000" stroke="#111"/><path d="M11.5 13V10.5A2.5 2.5 0 0 1 16.5 10.5V13" fill="none" stroke="#111" stroke-width="1.3"/></svg>
<svg style="position:absolute;left:621px;top:84px;" width="25" height="24" viewBox="0 0 25 24"><rect x="1.5" y="1.5" width="13" height="13" fill="#c8d8e8" stroke="#333" stroke-width="1.1"/><rect x="6.5" y="6" width="17" height="16.5" fill="#c0d4e8" stroke="#111" stroke-width="1.6"/><rect x="10" y="13" width="8" height="6.5" fill="#50a030" stroke="#111"/><path d="M11.5 13V10.5A2.5 2.5 0 0 1 16.5 10.5V11" fill="none" stroke="#111" stroke-width="1.3"/></svg>
<div style="position:absolute;left:657px;top:85px;width:1px;height:22px;background:#cdd5dd"></div>
<div style="position:absolute;left:658px;top:85px;width:1px;height:22px;background:#fafbfc"></div>
<svg style="position:absolute;left:667px;top:84px;" width="25" height="24" viewBox="0 0 25 24"><path d="M1 1H4M1 1V4M21 1H24M24 1V4M1 23H4M1 20V23M21 23H24M24 20V23" stroke="#111" stroke-width="2"/><rect x="4" y="10" width="12" height="10" fill="#c8d8e8" stroke="#222"/><circle cx="16" cy="9" r="6" fill="#c8d8e8" stroke="#222"/></svg>
<svg style="position:absolute;left:701px;top:84px;" width="25" height="24" viewBox="0 0 25 24"><path d="M1 7H4M1 7V10M1 23H4M1 20V23M21 23H24M24 20V23M21 1H24M24 1V4" stroke="#111" stroke-width="2"/><rect x="4" y="12" width="12" height="9" fill="#f0c020" stroke="#222"/><circle cx="16" cy="9" r="6" fill="#c8d8e8" stroke="#222"/><rect x="7" y="15" width="3" height="3" fill="#111"/></svg>
<div style="position:absolute;left:737px;top:85px;width:1px;height:22px;background:#cdd5dd"></div>
<div style="position:absolute;left:738px;top:85px;width:1px;height:22px;background:#fafbfc"></div>
<svg style="position:absolute;left:748px;top:84px;" width="24" height="24" viewBox="0 0 24 24"><defs><linearGradient id="tft" x1="0" y1="0" x2="1" y2="0"><stop offset="0.3" stop-color="#000"/><stop offset="1" stop-color="#999"/></linearGradient><linearGradient id="tfl" x1="0" y1="0" x2="0" y2="1"><stop offset="0.3" stop-color="#000"/><stop offset="1" stop-color="#bbb"/></linearGradient></defs><path d="M3 3H22L3 22Z" fill="#fff"/><rect x="0" y="0" width="24" height="3" fill="url(#tft)"/><rect x="0" y="0" width="3" height="24" fill="url(#tfl)"/><path d="M0 24L19.5 4.5L24 7.5L22.5 10.5C18 13.5 15 18 10.5 21C6.75 23.25 3 24 0 24Z" fill="#000"/><path d="M9 16.5L18 9" stroke="#888" stroke-width="1" stroke-dasharray="1.5 1.5"/><path d="M20 5L24 1.5V12.5L22.5 12Z" fill="#f8b010"/></svg>
<svg style="position:absolute;left:782px;top:84px;" width="25" height="24" viewBox="0 0 25 24"><path d="M0.5 0.5H24V8.5H22.5C22 5.5 20.5 4 17.5 4H15.5V20.5L19 22.2V23.5H5.5V22.2L9 20.5V4H7C4 4 2.5 5.5 2 8.5H0.5Z" fill="#000"/></svg>
<svg style="position:absolute;left:816px;top:86px;" width="25" height="21" viewBox="0 0 25 21"><path d="M1 12.5H15L23 18.5H9Z" fill="#f4f4f4" stroke="#111" stroke-width="1.5" stroke-linejoin="round"/><path d="M1 7.5H15L23 13.5H9Z" fill="#f4f4f4" stroke="#111" stroke-width="1.5" stroke-linejoin="round"/><path d="M1 2H15L23 8H9Z" fill="#f8f8f8" stroke="#111" stroke-width="1.5" stroke-linejoin="round"/></svg>
<svg style="position:absolute;left:850px;top:84px;" width="25" height="24" viewBox="0 0 25 24"><rect x="1" y="1" width="23" height="22" fill="#f0eee8" stroke="#111" stroke-width="1.6"/><rect x="2" y="2" width="21" height="3" fill="#8aa4c4"/><path d="M9 9L5 13L9 17M16 9L20 13L16 17" stroke="#111" stroke-width="1.4" fill="none"/></svg>
<svg style="position:absolute;left:884px;top:84px;" width="25" height="24" viewBox="0 0 25 24"><rect x="1.5" y="1" width="1.6" height="23" fill="#d02020"/><rect x="4.5" y="2" width="8" height="5" fill="#b8cce4" stroke="#222" stroke-width="0.9"/><rect x="4.5" y="9.5" width="19" height="5" fill="#b8cce4" stroke="#222" stroke-width="0.9"/><rect x="4.5" y="17" width="14" height="5" fill="#b8cce4" stroke="#222" stroke-width="0.9"/></svg>
<div style="position:absolute;left:918px;top:85px;width:1px;height:22px;background:#cdd5dd"></div>
<div style="position:absolute;left:919px;top:85px;width:1px;height:22px;background:#fafbfc"></div>
<svg style="position:absolute;left:930px;top:85px;" width="23" height="21" viewBox="0 0 23 21"><rect x="1" y="1" width="21" height="18" rx="2" fill="#f0f0ee" stroke="#888"/><rect x="4.5" y="4" width="3" height="12" fill="#333"/><rect x="10" y="4" width="3" height="12" fill="#333"/><rect x="15.5" y="4" width="3" height="12" fill="#333"/><rect x="3.5" y="10" width="5" height="3" fill="#ddd" stroke="#333" stroke-width="0.6"/><rect x="9" y="6" width="5" height="3" fill="#ddd" stroke="#333" stroke-width="0.6"/><rect x="14.5" y="9" width="5" height="3" fill="#ddd" stroke="#333" stroke-width="0.6"/></svg>
<svg style="position:absolute;left:963px;top:84px;" width="23" height="24" viewBox="0 0 23 24"><path d="M1.5 1.5H12L18 7.5V22H1.5Z" fill="#f0f0ee" stroke="#a0a0a0"/><path d="M9 12C8 15 10 17 12 16L18 22L20 20L14 14C15 12 13 10 11 11L13 13L11 14Z" fill="#e8e8e8" stroke="#a0a0a0"/></svg>
<svg style="position:absolute;left:4px;top:123px;" width="4" height="4" viewBox="0 0 4 4"><path d="M2 0L4 2L2 4L0 2Z" fill="#0a4a80"/><path d="M0.3 2.2H3.7L2 4Z" fill="#30b0e8"/></svg>
<svg style="position:absolute;left:4px;top:131px;" width="4" height="4" viewBox="0 0 4 4"><path d="M2 0L4 2L2 4L0 2Z" fill="#0a4a80"/><path d="M0.3 2.2H3.7L2 4Z" fill="#30b0e8"/></svg>
<svg style="position:absolute;left:4px;top:140px;" width="4" height="4" viewBox="0 0 4 4"><path d="M2 0L4 2L2 4L0 2Z" fill="#0a4a80"/><path d="M0.3 2.2H3.7L2 4Z" fill="#30b0e8"/></svg>
<svg style="position:absolute;left:20px;top:123px;" width="21" height="22" viewBox="0 0 21 22"><path d="M1.5 1.5H13L19 7.5V20.5H1.5Z" fill="#f8f8f8" stroke="#888"/><rect x="4" y="6" width="9" height="5" fill="#5080c0"/><path d="M4 13H16M4 15.5H16" stroke="#4060a0" stroke-width="1.2"/><path d="M12 17L15 19M15 17L12 19" stroke="#111"/></svg>
<svg style="position:absolute;left:52px;top:123px;" width="24" height="22" viewBox="0 0 24 22"><rect x="1" y="1" width="22" height="20" fill="none" stroke="#111" stroke-width="1.2" stroke-dasharray="2 1.5"/><path d="M4 14L9 11L20 14L15 17Z" fill="#fff" stroke="#111"/><path d="M4 10L9 7L20 10L15 13Z" fill="#fff" stroke="#111"/><path d="M4 6L9 3.5L20 6L15 9Z" fill="#fff" stroke="#111"/></svg>
<svg style="position:absolute;left:86px;top:123px;" width="24" height="22" viewBox="0 0 24 22"><rect x="1" y="1" width="22" height="20" fill="none" stroke="#e02020" stroke-width="1.2" stroke-dasharray="2 1.5"/><rect x="3.5" y="9" width="11" height="9" fill="#f0c020" stroke="#333"/><circle cx="14" cy="8" r="5.5" fill="#c8d8f0" stroke="#333" stroke-width="1.4"/></svg>
<div style="position:absolute;left:121px;top:123px;width:1px;height:22px;background:#cdd5dd"></div>
<div style="position:absolute;left:122px;top:123px;width:1px;height:22px;background:#fafbfc"></div>
<svg style="position:absolute;left:133px;top:122px;" width="24" height="24" viewBox="0 0 24 24"><defs><linearGradient id="oa133" x1="0" y1="0" x2="0" y2="1"><stop offset="0" stop-color="#fff0e0"/><stop offset="0.6" stop-color="#f8b060"/><stop offset="1" stop-color="#f08020"/></linearGradient></defs><path d="M21.5 2V7H13.5C12 7 11.5 8 11.5 9V13H15L8.5 22L2 13H6.5V9C6.5 5 9 2 13.5 2Z" transform="" fill="url(#oa133)" stroke="#d86a10" stroke-width="1.1" stroke-linejoin="round"/></svg>
<svg style="position:absolute;left:165px;top:122px;" width="24" height="24" viewBox="0 0 24 24"><defs><linearGradient id="oa165" x1="0" y1="0" x2="0" y2="1"><stop offset="0" stop-color="#fff0e0"/><stop offset="0.6" stop-color="#f8b060"/><stop offset="1" stop-color="#f08020"/></linearGradient></defs><path d="M21.5 2V7H13.5C12 7 11.5 8 11.5 9V13H15L8.5 22L2 13H6.5V9C6.5 5 9 2 13.5 2Z" transform="translate(24 0) scale(-1 1)" fill="url(#oa165)" stroke="#d86a10" stroke-width="1.1" stroke-linejoin="round"/></svg>
<svg style="position:absolute;left:200px;top:122px;" width="24" height="24" viewBox="0 0 24 24"><defs><linearGradient id="oa200" x1="0" y1="0" x2="0" y2="1"><stop offset="0" stop-color="#fff0e0"/><stop offset="0.6" stop-color="#f8b060"/><stop offset="1" stop-color="#f08020"/></linearGradient></defs><path d="M1 13.5L8 6.5V11H16V6.5L23 13.5L16 20.5V16H8V20.5Z" transform="" fill="url(#oa200)" stroke="#d86a10" stroke-width="1.1" stroke-linejoin="round"/></svg>
<svg style="position:absolute;left:235px;top:122px;" width="24" height="24" viewBox="0 0 24 24"><defs><linearGradient id="oa235" x1="0" y1="0" x2="0" y2="1"><stop offset="0" stop-color="#fff0e0"/><stop offset="0.6" stop-color="#f8b060"/><stop offset="1" stop-color="#f08020"/></linearGradient></defs><path d="M11.5 1L18 8H14V15H18L11.5 22L5 15H9V8H5Z" transform="" fill="url(#oa235)" stroke="#d86a10" stroke-width="1.1" stroke-linejoin="round"/></svg>
<div style="position:absolute;left:269px;top:123px;width:1px;height:22px;background:#cdd5dd"></div>
<div style="position:absolute;left:270px;top:123px;width:1px;height:22px;background:#fafbfc"></div>
<svg style="position:absolute;left:280px;top:122px;" width="25" height="24" viewBox="0 0 25 24"><path d="M7 2V15" stroke="#000" stroke-width="1.6"/><path d="M3.5 12L7 17L10.5 12Z" fill="#000"/><rect x="14" y="1" width="9" height="2.5" rx="1.2" fill="#111"/><rect x="14" y="5.5" width="9" height="2.5" rx="1.2" fill="#111"/><rect x="14" y="10" width="9" height="2.5" rx="1.2" fill="#111"/><rect x="14" y="14.5" width="9" height="2.5" rx="1.2" fill="#111"/><rect x="1" y="19" width="22" height="3" fill="#e0b040" stroke="#333" stroke-width="0.8"/></svg>
<svg style="position:absolute;left:314px;top:122px;" width="25" height="24" viewBox="0 0 25 24"><rect x="13" y="1" width="10" height="2.5" rx="1.2" fill="#111"/><rect x="9" y="5.5" width="14" height="2.5" rx="1.2" fill="#111"/><path d="M5 7L2 9L5 11" fill="#000"/><rect x="1" y="14" width="22" height="3" fill="#e0b040" stroke="#333" stroke-width="0.8"/><rect x="13" y="10" width="10" height="2.5" rx="1.2" fill="#111"/><rect x="13" y="19" width="10" height="2.5" rx="1.2" fill="#111"/></svg>
<svg style="position:absolute;left:348px;top:122px;" width="25" height="24" viewBox="0 0 25 24"><rect x="1" y="1" width="9" height="2.5" rx="1.2" fill="#111"/><rect x="1" y="5" width="20" height="3" fill="#a8b8c8" stroke="#333" stroke-width="0.8"/><rect x="1" y="10" width="13" height="2.5" rx="1.2" fill="#111"/><rect x="1" y="14.5" width="13" height="2.5" rx="1.2" fill="#111"/><rect x="1" y="19" width="9" height="2.5" rx="1.2" fill="#111"/><path d="M17 15L19.5 11L22 15Z" fill="#000"/></svg>
<svg style="position:absolute;left:382px;top:122px;" width="25" height="24" viewBox="0 0 25 24"><rect x="1" y="1" width="21" height="3" fill="#a8b8c8" stroke="#333" stroke-width="0.8"/><rect x="1" y="6" width="9" height="2.5" rx="1.2" fill="#111"/><rect x="1" y="10.5" width="9" height="2.5" rx="1.2" fill="#111"/><rect x="1" y="15" width="9" height="2.5" rx="1.2" fill="#111"/><rect x="1" y="19.5" width="9" height="2.5" rx="1.2" fill="#111"/><path d="M17 22V8" stroke="#000" stroke-width="1.6"/><path d="M13.5 10L17 5L20.5 10Z" fill="#000"/></svg>
<div style="position:absolute;left:416px;top:123px;width:1px;height:22px;background:#cdd5dd"></div>
<div style="position:absolute;left:417px;top:123px;width:1px;height:22px;background:#fafbfc"></div>
<div class="t" style="left:431.50px;top:127px;font-size:12.5px;letter-spacing:-1.812px;font-weight:normal;font-style:normal;color:#000;font-family:'Liberation Sans', sans-serif;">X</div>
<div style="position:absolute;left:443px;top:123px;width:61px;height:21px;background:#fff;border:1px solid #b4c0ca;box-sizing:border-box;border-radius:2px"></div>
<div style="position:absolute;left:493px;top:124px;width:10px;height:19px;background:linear-gradient(#f2f4f6,#dfe4e9);border-left:1px solid #b4c0ca;box-sizing:border-box"></div>
<svg style="position:absolute;left:493px;top:124px;" width="10" height="19" viewBox="0 0 10 19"><path d="M2 7L5 3.5L8 7Z" fill="#111"/><path d="M2 12L5 15.5L8 12Z" fill="#111"/><path d="M0 9.5H10" stroke="#c4ced6"/></svg>
<div class="t" style="left:447.00px;top:127px;font-size:12px;letter-spacing:0.103px;font-weight:normal;font-style:normal;color:#000;font-family:'Liberation Sans', sans-serif;">408.640</div>
<div class="t" style="left:513.50px;top:127px;font-size:12.5px;letter-spacing:-0.812px;font-weight:normal;font-style:normal;color:#000;font-family:'Liberation Sans', sans-serif;">Y</div>
<div style="position:absolute;left:525px;top:123px;width:61px;height:21px;background:#fff;border:1px solid #b4c0ca;box-sizing:border-box;border-radius:2px"></div>
<div style="position:absolute;left:575px;top:124px;width:10px;height:19px;background:linear-gradient(#f2f4f6,#dfe4e9);border-left:1px solid #b4c0ca;box-sizing:border-box"></div>
<svg style="position:absolute;left:575px;top:124px;" width="10" height="19" viewBox="0 0 10 19"><path d="M2 7L5 3.5L8 7Z" fill="#111"/><path d="M2 12L5 15.5L8 12Z" fill="#111"/><path d="M0 9.5H10" stroke="#c4ced6"/></svg>
<div class="t" style="left:529.00px;top:127px;font-size:12px;letter-spacing:0.103px;font-weight:normal;font-style:normal;color:#000;font-family:'Liberation Sans', sans-serif;">2701.15</div>
<div class="t" style="left:595.00px;top:127px;font-size:12.5px;letter-spacing:-0.812px;font-weight:normal;font-style:normal;color:#000;font-family:'Liberation Sans', sans-serif;">W</div>
<div style="position:absolute;left:611px;top:123px;width:61px;height:21px;background:#fff;border:1px solid #b4c0ca;box-sizing:border-box;border-radius:2px"></div>
<div style="position:absolute;left:661px;top:124px;width:10px;height:19px;background:linear-gradient(#f2f4f6,#dfe4e9);border-left:1px solid #b4c0ca;box-sizing:border-box"></div>
<svg style="position:absolute;left:661px;top:124px;" width="10" height="19" viewBox="0 0 10 19"><path d="M2 7L5 3.5L8 7Z" fill="#111"/><path d="M2 12L5 15.5L8 12Z" fill="#111"/><path d="M0 9.5H10" stroke="#c4ced6"/></svg>
<div class="t" style="left:615.00px;top:127px;font-size:12px;letter-spacing:0.103px;font-weight:normal;font-style:normal;color:#000;font-family:'Liberation Sans', sans-serif;">309.800</div>
<svg style="position:absolute;left:683px;top:125px;" width="13" height="17" viewBox="0 0 13 17"><path d="M3.5 8V5A3 3 0 0 1 9.5 5" fill="none" stroke="#888" stroke-width="1.4"/><rect x="1.5" y="8" width="9" height="7" rx="1" fill="#f0d060" stroke="#777"/></svg>
<div class="t" style="left:717.00px;top:127px;font-size:12.5px;letter-spacing:-1.500px;font-weight:normal;font-style:normal;color:#000;font-family:'Liberation Sans', sans-serif;">H</div>
<div style="position:absolute;left:728px;top:123px;width:61px;height:21px;background:#fff;border:1px solid #b4c0ca;box-sizing:border-box;border-radius:2px"></div>
<div style="position:absolute;left:778px;top:124px;width:10px;height:19px;background:linear-gradient(#f2f4f6,#dfe4e9);border-left:1px solid #b4c0ca;box-sizing:border-box"></div>
<svg style="position:absolute;left:778px;top:124px;" width="10" height="19" viewBox="0 0 10 19"><path d="M2 7L5 3.5L8 7Z" fill="#111"/><path d="M2 12L5 15.5L8 12Z" fill="#111"/><path d="M0 9.5H10" stroke="#c4ced6"/></svg>
<div class="t" style="left:732.00px;top:127px;font-size:12px;letter-spacing:0.103px;font-weight:normal;font-style:normal;color:#000;font-family:'Liberation Sans', sans-serif;">205.058</div>
<div style="position:absolute;left:791px;top:123px;width:50px;height:22px;background:linear-gradient(#f4f6f8,#dde3e9);border:1px solid #b4c0ca;box-sizing:border-box;border-radius:3px"></div>
<div style="position:absolute;left:821px;top:126px;width:1px;height:16px;background:#c0cad2"></div>
<div class="t" style="left:797.00px;top:126px;font-size:13px;letter-spacing:2.285px;font-weight:normal;font-style:normal;color:#000;font-family:'Liberation Sans', sans-serif;">px</div>
<svg style="position:absolute;left:825px;top:127px;" width="12" height="12" viewBox="0 0 12 12"><rect x="1.5" y="3" width="8" height="1.5" fill="#111"/><path d="M1.5 6H9.5L5.5 10Z" fill="#111"/></svg>
<div style="position:absolute;left:846px;top:123px;width:1px;height:22px;background:#cdd5dd"></div>
<div style="position:absolute;left:847px;top:123px;width:1px;height:22px;background:#fafbfc"></div>
<div class="t" style="left:861.00px;top:127px;font-size:12.5px;letter-spacing:-0.031px;font-weight:normal;font-style:normal;color:#000;font-family:'Liberation Sans', sans-serif;">Affect:</div>
<svg style="position:absolute;left:912px;top:126px;" width="16" height="14" viewBox="0 0 16 14"><path d="M1 2H11C13 2 13 3 13 4V8" stroke="#111" stroke-width="1.6" fill="none"/><path d="M1 5H9C10 5 10.5 6 10.5 7V8" stroke="#111" stroke-width="1.4" fill="none"/><path d="M4 11H11" stroke="#111" stroke-dasharray="1 1"/><path d="M11 9L14 11L11 13Z" fill="#111"/></svg>
<svg style="position:absolute;left:946px;top:126px;" width="16" height="14" viewBox="0 0 16 14"><path d="M1 2H8C12 2 13 5 13 8" stroke="#111" stroke-width="1.2" fill="none"/><path d="M1 5H7C9 5 10 7 10 8" stroke="#111" stroke-width="1.2" fill="none"/><path d="M4 11H11" stroke="#111" stroke-dasharray="1 1"/><path d="M11 9L14 11L11 13Z" fill="#111"/></svg>
<div style="position:absolute;left:971px;top:117px;width:34px;height:34px;background:linear-gradient(#e2e7ec,#d0d8e0);border:1px solid #aab6c0;box-sizing:border-box;border-radius:3px"></div>
<svg style="position:absolute;left:980px;top:126px;" width="16" height="14" viewBox="0 0 16 14"><path d="M1 1.5H12V8" stroke="#111" stroke-width="1.6" fill="none"/><rect x="1" y="4" width="10" height="3.5" fill="#7a9ac0"/><path d="M4 11H11" stroke="#111" stroke-dasharray="1 1"/><path d="M11 9L14 11L11 13Z" fill="#111"/></svg>
<svg style="position:absolute;left:1014px;top:126px;" width="16" height="14" viewBox="0 0 16 14"><rect x="1" y="1" width="12" height="5" fill="#111"/><path d="M2 3.5H12" stroke="#fff" stroke-dasharray="1.5 1.5"/><path d="M3 6V8M7 6V8M11 6V8" stroke="#111"/><path d="M4 11H11" stroke="#111" stroke-dasharray="1 1"/><path d="M11 9L14 11L11 13Z" fill="#111"/></svg>
<div style="position:absolute;left:1276px;top:116px;width:1px;height:35px;background:#c9d1d9"></div>
<svg style="position:absolute;left:52px;top:152px;" width="821" height="19" viewBox="0 0 821 19"><path d="M4.5 13V19 M16.5 16V19 M28.5 4V19 M39.5 16V19 M51.5 13V19 M63.5 16V19 M74.5 13V19 M86.5 16V19 M98.5 13V19 M110.5 16V19 M121.5 13V19 M133.5 16V19 M145.5 4V19 M156.5 16V19 M168.5 13V19 M180.5 16V19 M192.5 13V19 M203.5 16V19 M215.5 13V19 M227.5 16V19 M238.5 13V19 M250.5 16V19 M262.5 4V19 M274.5 16V19 M285.5 13V19 M297.5 16V19 M309.5 13V19 M321.5 16V19 M332.5 13V19 M344.5 16V19 M356.5 13V19 M367.5 16V19 M379.5 4V19 M391.5 16V19 M403.5 13V19 M414.5 16V19 M426.5 13V19 M438.5 16V19 M449.5 13V19 M461.5 16V19 M473.5 13V19 M485.5 16V19 M496.5 4V19 M508.5 16V19 M520.5 13V19 M531.5 16V19 M543.5 13V19 M555.5 16V19 M567.5 13V19 M578.5 16V19 M590.5 13V19 M602.5 16V19 M614.5 4V19 M625.5 16V19 M637.5 13V19 M649.5 16V19 M660.5 13V19 M672.5 16V19 M684.5 13V19 M696.5 16V19 M707.5 13V19 M719.5 16V19 M731.5 4V19 M742.5 16V19 M754.5 13V19 M766.5 16V19 M778.5 13V19 M789.5 16V19 M801.5 13V19 M813.5 16V19" stroke="#111" stroke-width="1"/></svg>
<div class="t" style="left:81.50px;top:152px;font-size:8.3px;letter-spacing:0.241px;font-weight:normal;font-style:normal;color:#000;font-family:'Liberation Sans', sans-serif;">0</div>
<div class="t" style="left:198.70px;top:152px;font-size:8.3px;letter-spacing:0.340px;font-weight:normal;font-style:normal;color:#000;font-family:'Liberation Sans', sans-serif;">250</div>
<div class="t" style="left:315.90px;top:152px;font-size:8.3px;letter-spacing:0.340px;font-weight:normal;font-style:normal;color:#000;font-family:'Liberation Sans', sans-serif;">500</div>
<div class="t" style="left:433.10px;top:152px;font-size:8.3px;letter-spacing:0.340px;font-weight:normal;font-style:normal;color:#000;font-family:'Liberation Sans', sans-serif;">750</div>
<div class="t" style="left:550.30px;top:152px;font-size:8.3px;letter-spacing:0.307px;font-weight:normal;font-style:normal;color:#000;font-family:'Liberation Sans', sans-serif;">1000</div>
<div class="t" style="left:667.50px;top:152px;font-size:8.3px;letter-spacing:0.307px;font-weight:normal;font-style:normal;color:#000;font-family:'Liberation Sans', sans-serif;">1250</div>
<div class="t" style="left:784.70px;top:152px;font-size:8.3px;letter-spacing:0.307px;font-weight:normal;font-style:normal;color:#000;font-family:'Liberation Sans', sans-serif;">1500</div>
<svg style="position:absolute;left:472px;top:165px;" width="10" height="7" viewBox="0 0 10 7"><path d="M0 0.5H10L5 6.5Z" fill="#000"/></svg>
<svg style="position:absolute;left:35px;top:171px;" width="17" height="762" viewBox="0 0 17 762"><path d="M15 15.5H17 M12 31.5H17 M15 48.5H17 M4 65.5H17 M15 82.5H17 M12 99.5H17 M15 116.5H17 M12 133.5H17 M15 150.5H17 M12 167.5H17 M15 184.5H17 M12 201.5H17 M15 218.5H17 M4 235.5H17 M15 252.5H17 M12 269.5H17 M15 286.5H17 M12 303.5H17 M15 320.5H17 M12 337.5H17 M15 354.5H17 M12 371.5H17 M15 387.5H17 M4 404.5H17 M15 421.5H17 M12 438.5H17 M15 455.5H17 M12 472.5H17 M15 489.5H17 M12 506.5H17 M15 523.5H17 M12 540.5H17 M15 557.5H17 M4 574.5H17 M15 591.5H17 M12 608.5H17 M15 625.5H17 M12 642.5H17 M15 659.5H17 M12 676.5H17 M15 693.5H17 M12 709.5H17 M15 726.5H17 M4 743.5H17 M15 760.5H17" stroke="#111" stroke-width="1"/></svg>
<div class="t" style="left:39.50px;top:237px;font-size:8.8px;letter-spacing:0.000px;font-weight:normal;font-style:normal;color:#000;font-family:'Liberation Sans', sans-serif;">3</div>
<div class="t" style="left:39.50px;top:245px;font-size:8.8px;letter-spacing:0.000px;font-weight:normal;font-style:normal;color:#000;font-family:'Liberation Sans', sans-serif;">k</div>
<div class="t" style="left:39.50px;top:406px;font-size:8.8px;letter-spacing:0.000px;font-weight:normal;font-style:normal;color:#000;font-family:'Liberation Sans', sans-serif;">2</div>
<div class="t" style="left:39.50px;top:414px;font-size:8.8px;letter-spacing:0.000px;font-weight:normal;font-style:normal;color:#000;font-family:'Liberation Sans', sans-serif;">7</div>
<div class="t" style="left:39.50px;top:422px;font-size:8.8px;letter-spacing:0.000px;font-weight:normal;font-style:normal;color:#000;font-family:'Liberation Sans', sans-serif;">5</div>
<div class="t" style="left:39.50px;top:430px;font-size:8.8px;letter-spacing:0.000px;font-weight:normal;font-style:normal;color:#000;font-family:'Liberation Sans', sans-serif;">0</div>
<div class="t" style="left:39.50px;top:576px;font-size:8.8px;letter-spacing:0.000px;font-weight:normal;font-style:normal;color:#000;font-family:'Liberation Sans', sans-serif;">2</div>
<div class="t" style="left:39.50px;top:584px;font-size:8.8px;letter-spacing:0.000px;font-weight:normal;font-style:normal;color:#000;font-family:'Liberation Sans', sans-serif;">5</div>
<div class="t" style="left:39.50px;top:592px;font-size:8.8px;letter-spacing:0.000px;font-weight:normal;font-style:normal;color:#000;font-family:'Liberation Sans', sans-serif;">0</div>
<div class="t" style="left:39.50px;top:600px;font-size:8.8px;letter-spacing:0.000px;font-weight:normal;font-style:normal;color:#000;font-family:'Liberation Sans', sans-serif;">0</div>
<div class="t" style="left:39.50px;top:745px;font-size:8.8px;letter-spacing:0.000px;font-weight:normal;font-style:normal;color:#000;font-family:'Liberation Sans', sans-serif;">2</div>
<div class="t" style="left:39.50px;top:753px;font-size:8.8px;letter-spacing:0.000px;font-weight:normal;font-style:normal;color:#000;font-family:'Liberation Sans', sans-serif;">2</div>
<div class="t" style="left:39.50px;top:761px;font-size:8.8px;letter-spacing:0.000px;font-weight:normal;font-style:normal;color:#000;font-family:'Liberation Sans', sans-serif;">5</div>
<div class="t" style="left:39.50px;top:769px;font-size:8.8px;letter-spacing:0.000px;font-weight:normal;font-style:normal;color:#000;font-family:'Liberation Sans', sans-serif;">0</div>
<div class="t" style="left:39.50px;top:915px;font-size:8.8px;letter-spacing:0.000px;font-weight:normal;font-style:normal;color:#000;font-family:'Liberation Sans', sans-serif;">2</div>
<div class="t" style="left:39.50px;top:923px;font-size:8.8px;letter-spacing:0.000px;font-weight:normal;font-style:normal;color:#000;font-family:'Liberation Sans', sans-serif;">k</div>
<svg style="position:absolute;left:46px;top:365px;" width="6" height="10" viewBox="0 0 6 10"><path d="M0.5 0L6 5L0.5 10Z" fill="#000"/></svg>
<div style="position:absolute;left:3px;top:162px;width:32px;height:1px;background:#cdd5dd"></div>
<div style="position:absolute;left:3px;top:165px;width:30px;height:30px;background:linear-gradient(#e9edf1,#d6dde4);border:1px solid #aeb9c3;box-sizing:border-box;border-radius:4px"></div>
<svg style="position:absolute;left:5px;top:167px;" width="26" height="26" viewBox="0 0 26 26"><path d="M7 3V19L11 15L14.5 22L17.5 20.5L14 13.5H19.5Z" fill="#000"/></svg>
<svg style="position:absolute;left:5px;top:197px;" width="26" height="26" viewBox="0 0 26 26"><path d="M3.5 21C3.5 12 7 5 21 3.5" stroke="#555" stroke-width="1.1" fill="none"/><rect x="4.5" y="4.5" width="6" height="6" fill="#8080e8" stroke="#1010f0" stroke-width="1.4"/><rect x="20.5" y="1.5" width="4.5" height="4.5" fill="#d0d4f8" stroke="#5050f0"/><rect x="1.5" y="20.5" width="4.5" height="4.5" fill="#d0d4f8" stroke="#5050f0"/><path d="M10.5 10.5L22.5 18.5L17 23.5Z" fill="#000"/></svg>
<svg style="position:absolute;left:5px;top:226px;" width="26" height="26" viewBox="0 0 26 26"><defs><linearGradient id="tw" x1="0" y1="0" x2="0" y2="1"><stop offset="0.4" stop-color="#555"/><stop offset="1" stop-color="#c8c8c8"/></linearGradient></defs><path d="M2.5 12C6 12 7 4 13 3C18 2.5 21 5 20.5 8C20 10.5 17 11 16 9C15.5 7.5 17 7 17 6.5C14 6 13 10 16 12H24V24H2.5Z" fill="url(#tw)" stroke="#222" stroke-width="1"/><path d="M3.5 13C7 13 8 5 13 4C17 3.5 19.5 5.5 19.5 8" stroke="#fff" stroke-width="0.8" fill="none"/></svg>
<svg style="position:absolute;left:5px;top:257px;" width="26" height="26" viewBox="0 0 26 26"><circle cx="9.5" cy="9.5" r="7.5" fill="#d8e6f4" stroke="#222" stroke-width="1.5"/><path d="M6 6C7 5 9 4.5 11 5" stroke="#fff" stroke-width="1.5"/><path d="M15 15L23 22" stroke="#e8a020" stroke-width="4.5" stroke-linecap="round"/><path d="M15 15L23 22" stroke="#f8c040" stroke-width="2" stroke-linecap="round"/></svg>
<svg style="position:absolute;left:5px;top:288px;" width="26" height="26" viewBox="0 0 26 26"><defs><linearGradient id="rg" x1="0" y1="0" x2="1" y2="1"><stop offset="0" stop-color="#eef3f8"/><stop offset="1" stop-color="#a8c0d8"/></linearGradient></defs><rect x="3.5" y="3.5" width="19" height="19" fill="url(#rg)" stroke="#000" stroke-width="1.6"/></svg>
<svg style="position:absolute;left:5px;top:317px;" width="26" height="26" viewBox="0 0 26 26"><path d="M13 2L23 7V19L13 24L3 19V7Z" fill="#a0a0d0" stroke="#333" stroke-width="1.2"/><path d="M13 13L23 8V19L13 24Z" fill="#e0e0f0"/><path d="M3 19L13 13L23 19L13 24Z" fill="#4848a0"/></svg>
<svg style="position:absolute;left:5px;top:348px;" width="26" height="26" viewBox="0 0 26 26"><defs><radialGradient id="cg" cx="0.5" cy="0.3" r="0.7"><stop offset="0" stop-color="#fff"/><stop offset="1" stop-color="#f08898"/></radialGradient></defs><circle cx="13" cy="12.5" r="10" fill="url(#cg)" stroke="#222" stroke-width="1.2"/></svg>
<svg style="position:absolute;left:5px;top:378px;" width="26" height="26" viewBox="0 0 26 26"><path d="M2 8L8 3L14 7L12 14L5 14Z" fill="#f8e890" stroke="#333" stroke-width="1"/><path d="M15 8L17.5 13L23 13.5L19 17L20 22.5L15 19.5L10 22.5L11 17L7 13.5L12.5 13Z" fill="#f8e070" stroke="#333" stroke-width="1"/></svg>
<svg style="position:absolute;left:5px;top:408px;" width="26" height="26" viewBox="0 0 26 26"><path d="M13 13C13 11 15 11 15.5 13C16 15.5 13 17 11 15.5C8.5 13.5 9.5 9 13 8.5C17 8 19.5 12 19 15C18 20 12 21.5 8.5 19C4.5 16 4.5 9 8.5 6C12 3 18 3.5 21 7C24 10.5 23.5 16 21 20" stroke="#222" stroke-width="1.5" fill="none"/></svg>
<svg style="position:absolute;left:5px;top:437px;" width="26" height="26" viewBox="0 0 26 26"><path d="M4 4L8 3L6 8L9 9C6 13 3 18 6 22C9 25 15 23 17 21" stroke="#222" stroke-width="1.2" fill="none"/><path d="M12 17L19 4L23 6L16 19L12 21Z" fill="#f8c030" stroke="#333" stroke-width="1"/><path d="M12 17L16 19L12 21Z" fill="#fff"/><path d="M19 4L23 6L24 4L20 2Z" fill="#f08090"/></svg>
<svg style="position:absolute;left:5px;top:467px;" width="26" height="26" viewBox="0 0 26 26"><path d="M2 3H11L5 21" stroke="#222" stroke-width="1.3" fill="none"/><rect x="3" y="19" width="4" height="4" fill="#fff" stroke="#222"/><path d="M7 21H14" stroke="#222"/><path d="M13 17L19 5L24 8L17 19Z" fill="#7ab0e0" stroke="#333"/><path d="M13 17L17 19L12 22Z" fill="#f8d040" stroke="#333" stroke-width="0.8"/></svg>
<svg style="position:absolute;left:5px;top:497px;" width="26" height="26" viewBox="0 0 26 26"><path d="M1 2.5C4 0.5 9 1 8.5 5C7 10 6.5 17 11 20.5C15 23 19.5 20 24 19.5C20 23.5 11 25 6 21C2 17 2.5 9 4.5 6C3.5 4.5 2.5 3.5 1 2.5Z" fill="#111"/><path d="M12 18.5L13.5 10L18 6L23 10L19.5 14.5Z" fill="#f8d040" stroke="#222" stroke-width="1"/><path d="M13 17L17 11" stroke="#222" stroke-width="0.9"/><path d="M17.5 6.5L23 1.5L28 5.5L23 10.5Z" fill="#4a88c0" stroke="#222" stroke-width="0.8"/><path d="M18 7L23.5 10" stroke="#d02020" stroke-width="1.4"/></svg>
<svg style="position:absolute;left:5px;top:557px;" width="26" height="26" viewBox="0 0 26 26"><circle cx="4" cy="3" r="1.3" fill="#222"/><circle cx="7" cy="5" r="1" fill="#444"/><circle cx="3.5" cy="7" r="1.3" fill="#222"/><circle cx="6" cy="10" r="1.3" fill="#222"/><circle cx="9" cy="8" r="1" fill="#666"/><circle cx="10.5" cy="5" r="0.9" fill="#888"/><path d="M12 10L19 8L24 22L17 24Z" fill="#60b030" stroke="#306010" stroke-width="0.9"/><path d="M12 10L19 8L18 5L13 6Z" fill="#f0d040" stroke="#333" stroke-width="0.8"/><path d="M14 5.5C14 3 17 2.5 17.5 5" fill="none" stroke="#333" stroke-width="1"/><path d="M19 12L22 21" stroke="#c0f0a0" stroke-width="1.3"/></svg>
<svg style="position:absolute;left:0px;top:520px;" width="32" height="32" viewBox="0 0 32 32"><path d="M6.5 29L13.5 10H19.5L26 29H21L19.5 24.5H13L11.5 29ZM14.5 20.5H18L16.3 14.5Z" fill="#000" fill-rule="evenodd"/><path d="M13.5 11.5L11 18" stroke="#555" stroke-width="1"/><path d="M24 9.5H29M24 30.5H29M26.5 9.5V30.5" stroke="#000" stroke-width="1.1"/></svg>
<svg style="position:absolute;left:5px;top:587px;" width="26" height="26" viewBox="0 0 26 26"><path d="M11 2L23 7L15 24L3 19Z" fill="#f8d0c0" stroke="#333" stroke-width="1.1"/></svg>
<svg style="position:absolute;left:5px;top:617px;" width="26" height="26" viewBox="0 0 26 26"><ellipse cx="12" cy="22" rx="10" ry="2.5" fill="#70c060" stroke="#306010"/><path d="M4 21C3 18 4 15 6 13" stroke="#60b050" stroke-width="2.5" fill="none"/><path d="M6 8L19 3L24 15L11 20Z" fill="#3a88b8" stroke="#222" stroke-width="1.1"/><path d="M7 9L18 5L19 8L8 12Z" fill="#9ad0f0"/></svg>
<svg style="position:absolute;left:5px;top:647px;" width="26" height="26" viewBox="0 0 26 26"><defs><linearGradient id="gg" x1="0" y1="0" x2="1" y2="1"><stop offset="0" stop-color="#40a040"/><stop offset="1" stop-color="#e0f4e0"/></linearGradient></defs><rect x="2.5" y="3" width="22" height="20" fill="url(#gg)"/><path d="M7 8L19 18" stroke="#333" stroke-width="1.2"/><rect x="4.5" y="5.5" width="4" height="4" rx="2" fill="#fff" stroke="#333"/><rect x="17.5" y="16" width="4" height="4" rx="2" fill="#fff" stroke="#333"/></svg>
<svg style="position:absolute;left:5px;top:677px;" width="26" height="26" viewBox="0 0 26 26"><path d="M16 4C18 1 22 1 23 3C25 5 24 8 21 10Z" fill="#222"/><path d="M17 7L20 10L9 21L7 22L6 19Z" fill="#d0e4f0" stroke="#333" stroke-width="1"/><path d="M6 19L4 22C3 24 5 25 6 23Z" fill="#3a5a80"/></svg>
<svg style="position:absolute;left:5px;top:707px;" width="26" height="26" viewBox="0 0 26 26"><rect x="8" y="2" width="8" height="6" fill="#a8c8e8" stroke="#333"/><rect x="11" y="11" width="8" height="5" fill="#f8d040" stroke="#333"/><path d="M12 8V11M4 19V14H12M20 19V13H23V19" stroke="#333" fill="none"/><rect x="1" y="19" width="7" height="6" fill="#a8c8e8" stroke="#333"/><rect x="17" y="19" width="7" height="6" fill="#a8c8e8" stroke="#333"/></svg>
<div style="position:absolute;left:369px;top:300px;width:210px;height:139px;background:#550000"></div>
<svg style="position:absolute;left:369px;top:300px;" width="212" height="141" viewBox="0 0 212 141"><path d="M0.5 0.5H210.5V139.5H0.5Z" fill="none" stroke="#c4d4d6" stroke-width="1" stroke-dasharray="4 4"/><path d="M0.5 0.5H210.5V139.5H0.5Z" fill="none" stroke="#505050" stroke-width="1" stroke-dasharray="4 4" stroke-dashoffset="4"/></svg>
<svg style="position:absolute;left:357px;top:288px;" width="11" height="11" viewBox="0 0 11 11"><path d="M0 0H7V1H6.5V2.5L8.5 4.5H10.5L11 4V11H4V10.5H4.5V8.5L2.5 6.5H1L0 7Z" fill="#000"/></svg>
<svg style="position:absolute;left:580px;top:440px;" width="11" height="11" viewBox="0 0 11 11"><path d="M0 0H7V1H6.5V2.5L8.5 4.5H10.5L11 4V11H4V10.5H4.5V8.5L2.5 6.5H1L0 7Z" fill="#000"/></svg>
<svg style="position:absolute;left:580px;top:288px;" width="11" height="11" viewBox="0 0 11 11"><path d="M0 0H7V1H6.5V2.5L8.5 4.5H10.5L11 4V11H4V10.5H4.5V8.5L2.5 6.5H1L0 7Z" fill="#000" transform="translate(11 0) scale(-1 1)"/></svg>
<svg style="position:absolute;left:357px;top:440px;" width="11" height="11" viewBox="0 0 11 11"><path d="M0 0H7V1H6.5V2.5L8.5 4.5H10.5L11 4V11H4V10.5H4.5V8.5L2.5 6.5H1L0 7Z" fill="#000" transform="translate(11 0) scale(-1 1)"/></svg>
<svg style="position:absolute;left:470px;top:287px;" width="9" height="13" viewBox="0 0 9 13"><path d="M4.5 0L9 4.5V5H7V8H9V8.5L4.5 13L0 8.5V8H2V5H0V4.5Z" fill="#000"/></svg>
<svg style="position:absolute;left:470px;top:440px;" width="9" height="13" viewBox="0 0 9 13"><path d="M4.5 0L9 4.5V5H7V8H9V8.5L4.5 13L0 8.5V8H2V5H0V4.5Z" fill="#000"/></svg>
<svg style="position:absolute;left:356px;top:365px;" width="13" height="9" viewBox="0 0 13 9"><path d="M0 4.5L4.5 0H5V2H8V0H8.5L13 4.5L8.5 9H8V7H5V9H4.5Z" fill="#000"/></svg>
<svg style="position:absolute;left:580px;top:365px;" width="13" height="9" viewBox="0 0 13 9"><path d="M0 4.5L4.5 0H5V2H8V0H8.5L13 4.5L8.5 9H8V7H5V9H4.5Z" fill="#000"/></svg>
<svg style="position:absolute;left:666px;top:369px;" width="14" height="22" viewBox="0 0 14 22"><path d="M2.5 2.5V17L6 13.5L9 20L11.5 19L8.5 12.5H13.5Z" fill="#000" opacity="0.18"/><path d="M1 1V15.5L4.5 12L7.5 18.5L10 17.5L7 11H12Z" fill="#1c2050" stroke="#fff" stroke-width="0.9"/></svg>
<svg style="position:absolute;left:7px;top:156px;" width="4" height="4" viewBox="0 0 4 4"><path d="M2 0L4 2L2 4L0 2Z" fill="#0a4a80"/><path d="M0.3 2.2H3.7L2 4Z" fill="#30b0e8"/></svg>
<svg style="position:absolute;left:16px;top:156px;" width="4" height="4" viewBox="0 0 4 4"><path d="M2 0L4 2L2 4L0 2Z" fill="#0a4a80"/><path d="M0.3 2.2H3.7L2 4Z" fill="#30b0e8"/></svg>
<svg style="position:absolute;left:25px;top:156px;" width="4" height="4" viewBox="0 0 4 4"><path d="M2 0L4 2L2 4L0 2Z" fill="#0a4a80"/><path d="M0.3 2.2H3.7L2 4Z" fill="#30b0e8"/></svg>
<div style="position:absolute;left:873px;top:152px;width:407px;height:781px;background:#eef1f6"></div>
<div style="position:absolute;left:879px;top:152px;width:1px;height:781px;background:#c6d2d4"></div>
<div style="position:absolute;left:880px;top:152px;width:1px;height:781px;background:#e2e9ea"></div>
<svg style="position:absolute;left:874px;top:532px;" width="4" height="4" viewBox="0 0 4 4"><path d="M2 0L4 2L2 4L0 2Z" fill="#0a4a80"/><path d="M0.3 2.2H3.7L2 4Z" fill="#30b0e8"/></svg>
<svg style="position:absolute;left:874px;top:541px;" width="4" height="4" viewBox="0 0 4 4"><path d="M2 0L4 2L2 4L0 2Z" fill="#0a4a80"/><path d="M0.3 2.2H3.7L2 4Z" fill="#30b0e8"/></svg>
<svg style="position:absolute;left:874px;top:550px;" width="4" height="4" viewBox="0 0 4 4"><path d="M2 0L4 2L2 4L0 2Z" fill="#0a4a80"/><path d="M0.3 2.2H3.7L2 4Z" fill="#30b0e8"/></svg>
<div style="position:absolute;left:882px;top:154px;width:362px;height:24px;background:#d3dae2"></div>
<svg style="position:absolute;left:886px;top:158px;" width="16" height="16" viewBox="0 0 16 16"><defs><linearGradient id="hft" x1="0" y1="0" x2="1" y2="0"><stop offset="0.3" stop-color="#000"/><stop offset="1" stop-color="#999"/></linearGradient><linearGradient id="hfl" x1="0" y1="0" x2="0" y2="1"><stop offset="0.3" stop-color="#000"/><stop offset="1" stop-color="#bbb"/></linearGradient></defs><path d="M2 2H15L2 15Z" fill="#fff"/><rect x="0" y="0" width="16" height="2" fill="url(#hft)"/><rect x="0" y="0" width="2" height="16" fill="url(#hfl)"/><path d="M0 16L13 3L16 5L15 7C12 9 10 12 7 14C4.5 15.5 2 16 0 16Z" fill="#000"/><path d="M6 11L12 6" stroke="#888" stroke-width="0.8" stroke-dasharray="1 1"/><path d="M13.5 3.5L16 1V8.5L15 8Z" fill="#f8b010"/></svg>
<div class="t" style="left:904.00px;top:157px;font-size:14px;letter-spacing:0.401px;font-weight:normal;font-style:normal;color:#000;font-family:'Liberation Sans', sans-serif;">Fill and Stroke (Shift+Ctrl+F)</div>
<svg style="position:absolute;left:1205px;top:159px;" width="15" height="14" viewBox="0 0 15 14"><rect x="1" y="1" width="12" height="12" rx="2" fill="#e4e8ec" stroke="#666"/><path d="M5 4L10 7L5 10Z" fill="#555"/></svg>
<svg style="position:absolute;left:1226px;top:159px;" width="14" height="14" viewBox="0 0 14 14"><rect x="1" y="1" width="12" height="12" rx="2" fill="#e4e8ec" stroke="#444"/><path d="M4 4L10 10M10 4L4 10" stroke="#222" stroke-width="1.8"/></svg>
<div style="position:absolute;left:886px;top:207px;width:353px;height:285px;border:1px solid #b4c0ca;box-sizing:border-box;background:#eef1f6"></div>
<div style="position:absolute;left:924px;top:185px;width:102px;height:23px;background:#dee4e8;border:1px solid #b4c0ca;border-bottom:none;box-sizing:border-box;border-radius:3px 3px 0 0"></div>
<div style="position:absolute;left:1026px;top:185px;width:102px;height:23px;background:#dee4e8;border:1px solid #b4c0ca;border-bottom:none;box-sizing:border-box;border-radius:3px 3px 0 0"></div>
<div style="position:absolute;left:886px;top:182px;width:38px;height:27px;background:#eef1f6;border:1px solid #b4c0ca;border-bottom:none;box-sizing:border-box;border-radius:3px 3px 0 0"></div>
<div style="position:absolute;left:887px;top:182px;width:36px;height:3px;background:#0d5a8c;border-radius:2px 2px 0 0"></div>
<svg style="position:absolute;left:890px;top:189px;" width="13" height="13" viewBox="0 0 13 13"><defs><linearGradient id="fg1" x1="0" y1="0" x2="1" y2="1"><stop offset="0" stop-color="#b0c4dc"/><stop offset="1" stop-color="#f0f4f8"/></linearGradient></defs><rect width="12" height="12" fill="url(#fg1)"/></svg>
<div class="t" style="left:904.00px;top:186px;font-size:14px;letter-spacing:-0.950px;font-weight:normal;font-style:normal;color:#000;font-family:'Liberation Sans', sans-serif;">Fill</div>
<svg style="position:absolute;left:926px;top:189px;" width="13" height="13" viewBox="0 0 13 13"><rect x="0.5" y="0.5" width="11" height="11" fill="#f4f6f8" stroke="#666"/></svg>
<div class="t" style="left:939.00px;top:188px;font-size:14px;letter-spacing:0.665px;font-weight:normal;font-style:normal;color:#000;font-family:'Liberation Sans', sans-serif;">Stroke paint</div>
<svg style="position:absolute;left:1028px;top:188px;" width="13" height="14" viewBox="0 0 13 14"><path d="M0 3.5H9M0 11.5H12" stroke="#444" stroke-width="1.3"/><path d="M0 7.5H12" stroke="#444" stroke-width="1.1" stroke-dasharray="1.5 1"/><path d="M9 1L12.5 3.5L9 6Z" fill="#333"/></svg>
<div class="t" style="left:1041.00px;top:188px;font-size:14px;letter-spacing:0.805px;font-weight:normal;font-style:normal;color:#000;font-family:'Liberation Sans', sans-serif;">Stroke style</div>
<svg style="position:absolute;left:901px;top:222px;" width="15" height="15" viewBox="0 0 15 15"><path d="M3 3L12 12M12 3L3 12" stroke="#000" stroke-width="2.8"/></svg>
<div style="position:absolute;left:925px;top:214px;width:32px;height:32px;background:linear-gradient(#e2e7ec,#d2d9e0);border:1px solid #aab6c0;box-sizing:border-box;border-radius:3px"></div>
<div style="position:absolute;left:930px;top:219px;width:22px;height:22px;background:#9ab4d4;border:2px solid #333;box-sizing:border-box"></div>
<svg style="position:absolute;left:962px;top:219px;" width="22" height="22" viewBox="0 0 22 22"><defs><linearGradient id="lg2" x1="0" y1="0" x2="1" y2="1"><stop offset="0" stop-color="#9ab4d4"/><stop offset="1" stop-color="#fff"/></linearGradient></defs><rect x="1" y="1" width="20" height="20" fill="url(#lg2)" stroke="#333" stroke-width="2"/></svg>
<svg style="position:absolute;left:994px;top:219px;" width="22" height="22" viewBox="0 0 22 22"><defs><radialGradient id="rg2" cx="0.5" cy="0.5" r="0.6"><stop offset="0" stop-color="#fff"/><stop offset="1" stop-color="#9ab4d4"/></radialGradient></defs><rect x="1" y="1" width="20" height="20" fill="url(#rg2)" stroke="#333" stroke-width="2"/></svg>
<svg style="position:absolute;left:1026px;top:219px;" width="22" height="22" viewBox="0 0 22 22"><rect x="1" y="1" width="20" height="20" fill="#9ab4d4" stroke="#333" stroke-width="2"/><path d="M6 2L10 6L6 10L2 6ZM16 2L20 6L16 10L12 6ZM11 7L15 11L11 15L7 11ZM6 12L10 16L6 20L2 16ZM16 12L20 16L16 20L12 16Z" fill="#fff"/></svg>
<svg style="position:absolute;left:1058px;top:219px;" width="22" height="22" viewBox="0 0 22 22"><rect x="1" y="1" width="20" height="20" fill="#9ab4d4" stroke="#333" stroke-width="2"/><rect x="3" y="3" width="15" height="15" fill="#fff"/><path d="M3 18H18V3" stroke="#333" stroke-width="1.2" fill="none"/></svg>
<div class="t" style="left:1093.00px;top:216px;font-size:25px;letter-spacing:0.000px;font-weight:bold;font-style:normal;color:#000;font-family:'Liberation Sans', sans-serif;letter-spacing:0">?</div>
<svg style="position:absolute;left:1191px;top:223px;" width="15" height="15" viewBox="0 0 15 15"><path d="M2 2C0 6 1 13 7.5 14C14 13 15 6 13 2L11 4C12 8 10 10 7.5 10C5 10 3 8 4 4Z" fill="#111"/></svg>
<div style="position:absolute;left:1210px;top:214px;width:22px;height:32px;background:linear-gradient(#e2e7ec,#d2d9e0);border:1px solid #aab6c0;box-sizing:border-box;border-radius:3px"></div>
<svg style="position:absolute;left:1213px;top:221px;" width="16" height="17" viewBox="0 0 16 17"><path d="M1.5 3C0.5 8 3 14 8 16C13 14 15.5 8 14.5 3C12 1 9.5 2 8 4C6.5 2 4 1 1.5 3Z" fill="#111"/></svg>
<div style="position:absolute;left:890px;top:260px;width:345px;height:228px;border:1px solid #c4ced6;box-sizing:border-box;border-radius:2px"></div>
<div style="position:absolute;left:893px;top:252px;width:67px;height:12px;background:#eef1f6"></div>
<div class="t" style="left:895.00px;top:250px;font-size:14px;letter-spacing:0.496px;font-weight:normal;font-style:normal;color:#000;font-family:'Liberation Sans', sans-serif;">Flat color</div>
<div style="position:absolute;left:896px;top:293px;width:334px;height:170px;border:1px solid #b4c0ca;box-sizing:border-box;background:#eef1f6"></div>
<div style="position:absolute;left:898px;top:271px;width:36px;height:23px;background:#dee4e8;border:1px solid #b4c0ca;border-bottom:none;box-sizing:border-box;border-radius:3px 3px 0 0"></div>
<div class="t" style="left:902.00px;top:275px;font-size:14px;letter-spacing:-1.155px;font-weight:normal;font-style:normal;color:#000;font-family:'Liberation Sans', sans-serif;">RGB</div>
<div style="position:absolute;left:969px;top:271px;width:46px;height:23px;background:#dee4e8;border:1px solid #b4c0ca;border-bottom:none;box-sizing:border-box;border-radius:3px 3px 0 0"></div>
<div class="t" style="left:972.00px;top:275px;font-size:14px;letter-spacing:-0.153px;font-weight:normal;font-style:normal;color:#000;font-family:'Liberation Sans', sans-serif;">CMYK</div>
<div style="position:absolute;left:1016px;top:271px;width:49px;height:23px;background:#dee4e8;border:1px solid #b4c0ca;border-bottom:none;box-sizing:border-box;border-radius:3px 3px 0 0"></div>
<div class="t" style="left:1019.00px;top:275px;font-size:14px;letter-spacing:0.828px;font-weight:normal;font-style:normal;color:#000;font-family:'Liberation Sans', sans-serif;">Wheel</div>
<div style="position:absolute;left:1066px;top:271px;width:37px;height:23px;background:#dee4e8;border:1px solid #b4c0ca;border-bottom:none;box-sizing:border-box;border-radius:3px 3px 0 0"></div>
<div class="t" style="left:1069.50px;top:275px;font-size:14px;letter-spacing:-0.540px;font-weight:normal;font-style:normal;color:#000;font-family:'Liberation Sans', sans-serif;">CMS</div>
<div style="position:absolute;left:933px;top:268px;width:36px;height:27px;background:#eef1f6;border:1px solid #b4c0ca;border-bottom:none;box-sizing:border-box;border-radius:3px 3px 0 0"></div>
<div style="position:absolute;left:934px;top:268px;width:34px;height:3px;background:#0d5a8c;border-radius:2px 2px 0 0"></div>
<div class="t" style="left:937.00px;top:273px;font-size:14px;letter-spacing:0.385px;font-weight:normal;font-style:normal;color:#000;font-family:'Liberation Sans', sans-serif;">HSL</div>
<div style="position:absolute;left:918px;top:295px;width:1px;height:106px;background:#c8d4d6"></div>
<div style="position:absolute;left:1165px;top:295px;width:1px;height:106px;background:#c8d4d6"></div>
<div class="t" style="left:901.00px;top:299px;font-size:14px;letter-spacing:-1.080px;font-weight:normal;font-style:normal;color:#000;font-family:'Liberation Sans', sans-serif;">H</div>
<div style="position:absolute;left:919px;top:295px;width:246px;height:1px;background:#d0dcde"></div>
<div style="position:absolute;left:919px;top:296px;width:246px;height:1px;background:#fff"></div>
<div style="position:absolute;left:920px;top:297px;width:244px;height:21px;background:linear-gradient(90deg,#f00,#ff0 16.7%,#0f0 33.3%,#0ff 50%,#00f 66.7%,#f0f 83.3%,#f00)"></div>
<div style="position:absolute;left:919px;top:318px;width:246px;height:1px;background:#fff"></div>
<div style="position:absolute;left:918px;top:295px;width:1px;height:1px;background:#000"></div>
<div style="position:absolute;left:1165px;top:295px;width:1px;height:1px;background:#000"></div>
<div style="position:absolute;left:918px;top:319px;width:1px;height:1px;background:#000"></div>
<div style="position:absolute;left:1165px;top:319px;width:1px;height:1px;background:#000"></div>
<div style="position:absolute;left:1173px;top:295px;width:51px;height:25px;background:#fff;border:1px solid #b4c0ca;box-sizing:border-box;border-radius:2px"></div>
<div style="position:absolute;left:1211px;top:296px;width:12px;height:23px;background:linear-gradient(#f2f4f6,#dfe4e9);border-left:1px solid #b4c0ca;box-sizing:border-box"></div>
<div class="t" style="left:1177.00px;top:301px;font-size:13.5px;letter-spacing:0.616px;font-weight:normal;font-style:normal;color:#000;font-family:'Liberation Sans', sans-serif;">0</div>
<div class="t" style="left:901.00px;top:326px;font-size:14px;letter-spacing:-1.310px;font-weight:normal;font-style:normal;color:#000;font-family:'Liberation Sans', sans-serif;">S</div>
<div style="position:absolute;left:919px;top:322px;width:246px;height:1px;background:#d0dcde"></div>
<div style="position:absolute;left:919px;top:323px;width:246px;height:1px;background:#fff"></div>
<div style="position:absolute;left:920px;top:324px;width:244px;height:21px;background:linear-gradient(90deg,#2b2b2b,#550000)"></div>
<div style="position:absolute;left:919px;top:345px;width:246px;height:1px;background:#fff"></div>
<div style="position:absolute;left:918px;top:322px;width:1px;height:1px;background:#000"></div>
<div style="position:absolute;left:1165px;top:322px;width:1px;height:1px;background:#000"></div>
<div style="position:absolute;left:918px;top:346px;width:1px;height:1px;background:#000"></div>
<div style="position:absolute;left:1165px;top:346px;width:1px;height:1px;background:#000"></div>
<div style="position:absolute;left:1173px;top:322px;width:51px;height:25px;background:#fff;border:1px solid #b4c0ca;box-sizing:border-box;border-radius:2px"></div>
<div style="position:absolute;left:1211px;top:323px;width:12px;height:23px;background:linear-gradient(#f2f4f6,#dfe4e9);border-left:1px solid #b4c0ca;box-sizing:border-box"></div>
<div class="t" style="left:1177.00px;top:328px;font-size:13.5px;letter-spacing:0.891px;font-weight:normal;font-style:normal;color:#000;font-family:'Liberation Sans', sans-serif;">255</div>
<div class="t" style="left:901.00px;top:353px;font-size:14px;letter-spacing:-0.770px;font-weight:normal;font-style:normal;color:#000;font-family:'Liberation Sans', sans-serif;">L</div>
<div style="position:absolute;left:919px;top:349px;width:246px;height:1px;background:#d0dcde"></div>
<div style="position:absolute;left:919px;top:350px;width:246px;height:1px;background:#fff"></div>
<div style="position:absolute;left:920px;top:351px;width:244px;height:21px;background:linear-gradient(90deg,#000,#f00 50%,#fff)"></div>
<div style="position:absolute;left:919px;top:372px;width:246px;height:1px;background:#fff"></div>
<div style="position:absolute;left:918px;top:349px;width:1px;height:1px;background:#000"></div>
<div style="position:absolute;left:1165px;top:349px;width:1px;height:1px;background:#000"></div>
<div style="position:absolute;left:918px;top:373px;width:1px;height:1px;background:#000"></div>
<div style="position:absolute;left:1165px;top:373px;width:1px;height:1px;background:#000"></div>
<div style="position:absolute;left:1173px;top:349px;width:51px;height:25px;background:#fff;border:1px solid #b4c0ca;box-sizing:border-box;border-radius:2px"></div>
<div style="position:absolute;left:1211px;top:350px;width:12px;height:23px;background:linear-gradient(#f2f4f6,#dfe4e9);border-left:1px solid #b4c0ca;box-sizing:border-box"></div>
<div class="t" style="left:1177.00px;top:355px;font-size:13.5px;letter-spacing:1.233px;font-weight:normal;font-style:normal;color:#000;font-family:'Liberation Sans', sans-serif;">42</div>
<div class="t" style="left:901.00px;top:380px;font-size:14px;letter-spacing:0.620px;font-weight:normal;font-style:normal;color:#000;font-family:'Liberation Sans', sans-serif;">A</div>
<div style="position:absolute;left:919px;top:376px;width:246px;height:1px;background:#d0dcde"></div>
<div style="position:absolute;left:919px;top:377px;width:246px;height:1px;background:#fff"></div>
<div style="position:absolute;left:920px;top:378px;width:244px;height:21px;background:repeating-conic-gradient(#5a5a5a 0% 25%,#9a9a9a 0% 50%) 0 0/16px 16px"></div>
<div style="position:absolute;left:919px;top:399px;width:246px;height:1px;background:#fff"></div>
<div style="position:absolute;left:918px;top:376px;width:1px;height:1px;background:#000"></div>
<div style="position:absolute;left:1165px;top:376px;width:1px;height:1px;background:#000"></div>
<div style="position:absolute;left:918px;top:400px;width:1px;height:1px;background:#000"></div>
<div style="position:absolute;left:1165px;top:400px;width:1px;height:1px;background:#000"></div>
<div style="position:absolute;left:1173px;top:376px;width:51px;height:25px;background:#fff;border:1px solid #b4c0ca;box-sizing:border-box;border-radius:2px"></div>
<div style="position:absolute;left:1211px;top:377px;width:12px;height:23px;background:linear-gradient(#f2f4f6,#dfe4e9);border-left:1px solid #b4c0ca;box-sizing:border-box"></div>
<div class="t" style="left:1177.00px;top:382px;font-size:13.5px;letter-spacing:0.891px;font-weight:normal;font-style:normal;color:#000;font-family:'Liberation Sans', sans-serif;">255</div>
<div style="position:absolute;left:920px;top:378px;width:244px;height:21px;background:linear-gradient(90deg,rgba(85,0,0,0),#550000)"></div>
<svg style="position:absolute;left:955px;top:350px;" width="12" height="7" viewBox="0 0 12 7"><path d="M1 0.5H11L6 6Z" fill="#000" stroke="#fff" stroke-width="1"/></svg>
<svg style="position:absolute;left:955px;top:367px;" width="12" height="7" viewBox="0 0 12 7"><path d="M1 6.5H11L6 1Z" fill="#000" stroke="#fff" stroke-width="1"/></svg>
<svg style="position:absolute;left:920px;top:297px;" width="5" height="21" viewBox="0 0 5 21"><path d="M0 0H4L0 4Z M0 21H4L0 17Z" fill="#000"/></svg>
<svg style="position:absolute;left:1159px;top:324px;" width="5" height="21" viewBox="0 0 5 21"><path d="M5 0V4L1 0Z M5 21V17L1 21Z" fill="#000"/></svg>
<svg style="position:absolute;left:1159px;top:378px;" width="5" height="21" viewBox="0 0 5 21"><path d="M5 0V4L1 0Z M5 21V17L1 21Z" fill="#000"/></svg>
<svg style="position:absolute;left:1212px;top:297px;" width="11" height="21" viewBox="0 0 11 21"><path d="M2.5 7L5.5 3.5L8.5 7Z" fill="#111"/><path d="M2.5 14L5.5 17.5L8.5 14Z" fill="#9aa8b4"/><path d="M0 10.5H11" stroke="#c4ced6"/></svg>
<svg style="position:absolute;left:1212px;top:324px;" width="11" height="21" viewBox="0 0 11 21"><path d="M2.5 7L5.5 3.5L8.5 7Z" fill="#9aa8b4"/><path d="M2.5 14L5.5 17.5L8.5 14Z" fill="#111"/><path d="M0 10.5H11" stroke="#c4ced6"/></svg>
<svg style="position:absolute;left:1212px;top:351px;" width="11" height="21" viewBox="0 0 11 21"><path d="M2.5 7L5.5 3.5L8.5 7Z" fill="#111"/><path d="M2.5 14L5.5 17.5L8.5 14Z" fill="#111"/><path d="M0 10.5H11" stroke="#c4ced6"/></svg>
<svg style="position:absolute;left:1212px;top:378px;" width="11" height="21" viewBox="0 0 11 21"><path d="M2.5 7L5.5 3.5L8.5 7Z" fill="#9aa8b4"/><path d="M2.5 14L5.5 17.5L8.5 14Z" fill="#111"/><path d="M0 10.5H11" stroke="#c4ced6"/></svg>
<div style="position:absolute;left:897px;top:465px;width:18px;height:21px;background:#d6dce2"></div>
<svg style="position:absolute;left:899px;top:468px;" width="14" height="15" viewBox="0 0 14 15"><path d="M2 1L13 7.5L2 14Z" fill="#a8aeb4"/></svg>
<div style="position:absolute;left:919px;top:465px;width:18px;height:21px;background:#d6dce2"></div>
<svg style="position:absolute;left:920px;top:467px;" width="16" height="16" viewBox="0 0 16 16"><circle cx="8" cy="8" r="6.5" fill="none" stroke="#a8aeb4" stroke-width="3.5"/></svg>
<div class="t" style="left:1131.00px;top:469px;font-size:12.5px;letter-spacing:-1.469px;font-weight:normal;font-style:normal;color:#000;font-family:'Liberation Sans', sans-serif;">RGBA:</div>
<div style="position:absolute;left:1166px;top:465px;width:64px;height:21px;background:#fff;border:1px solid #c4ced6;box-sizing:border-box;border-radius:2px"></div>
<div class="t" style="left:1170.00px;top:469px;font-size:12.5px;letter-spacing:0.509px;font-weight:normal;font-style:normal;color:#000;font-family:'Liberation Sans', sans-serif;">550000ff</div>
<div class="t" style="left:891.00px;top:494px;font-size:14px;letter-spacing:0.058px;font-weight:normal;font-style:normal;color:#000;font-family:'Liberation Sans', sans-serif;">Blur:</div>
<div style="position:absolute;left:892px;top:520px;width:283px;height:6px;background:#eef1f6;border:1px solid #b4c0ca;box-sizing:border-box;border-radius:3px"></div>
<svg style="position:absolute;left:892px;top:520px;" width="283" height="6" viewBox="0 0 283 6"><path d="M12.0 1V5" stroke="#d0d8e0"/><path d="M24.1 1V5" stroke="#d0d8e0"/><path d="M36.2 1V5" stroke="#d0d8e0"/><path d="M48.3 1V5" stroke="#d0d8e0"/><path d="M60.4 1V5" stroke="#d0d8e0"/><path d="M72.5 1V5" stroke="#d0d8e0"/><path d="M84.6 1V5" stroke="#d0d8e0"/><path d="M96.7 1V5" stroke="#d0d8e0"/><path d="M108.8 1V5" stroke="#d0d8e0"/><path d="M120.9 1V5" stroke="#d0d8e0"/><path d="M133.0 1V5" stroke="#d0d8e0"/><path d="M145.1 1V5" stroke="#d0d8e0"/><path d="M157.2 1V5" stroke="#d0d8e0"/><path d="M169.3 1V5" stroke="#d0d8e0"/><path d="M181.4 1V5" stroke="#d0d8e0"/><path d="M193.5 1V5" stroke="#d0d8e0"/><path d="M205.6 1V5" stroke="#d0d8e0"/><path d="M217.7 1V5" stroke="#d0d8e0"/><path d="M229.8 1V5" stroke="#d0d8e0"/><path d="M241.9 1V5" stroke="#d0d8e0"/><path d="M254.0 1V5" stroke="#d0d8e0"/><path d="M266.1 1V5" stroke="#d0d8e0"/><path d="M278.2 1V5" stroke="#d0d8e0"/></svg>
<div style="position:absolute;left:892px;top:520px;width:31px;height:6px;background:linear-gradient(#1a86c8 50%,#0c3a60 50%);border-radius:3px"></div>
<svg style="position:absolute;left:903px;top:520px;" width="8" height="6" viewBox="0 0 8 6"><path d="M4 0.5L7 3L4 5.5L1 3Z" fill="#1a86c8" stroke="#0c3a60" stroke-width="0.8"/></svg>
<div style="position:absolute;left:1177px;top:511px;width:61px;height:25px;background:#fff;border:1px solid #b4c0ca;box-sizing:border-box;border-radius:2px"></div>
<div style="position:absolute;left:1225px;top:512px;width:12px;height:23px;background:linear-gradient(#f2f4f6,#dfe4e9);border-left:1px solid #b4c0ca;box-sizing:border-box"></div>
<svg style="position:absolute;left:1226px;top:512px;" width="11" height="23" viewBox="0 0 11 23"><path d="M2.5 8L5.5 4.5L8.5 8Z" fill="#111"/><path d="M2.5 15L5.5 18.5L8.5 15Z" fill="#9aa8b4"/><path d="M0 11.5H11" stroke="#c4ced6"/></svg>
<div class="t" style="left:1181.00px;top:516px;font-size:13.5px;letter-spacing:0.117px;font-weight:normal;font-style:normal;color:#000;font-family:'Liberation Sans', sans-serif;">0.0</div>
<div class="t" style="left:890.00px;top:540px;font-size:14px;letter-spacing:0.707px;font-weight:normal;font-style:normal;color:#000;font-family:'Liberation Sans', sans-serif;">Opacity, %</div>
<div style="position:absolute;left:892px;top:566px;width:280px;height:7px;background:#c4d0d8;border:1px solid #b4c0ca;box-sizing:border-box;border-radius:3px"></div>
<svg style="position:absolute;left:892px;top:566px;" width="280" height="7" viewBox="0 0 280 7"><path d="M12.0 1V6" stroke="#e4eaee"/><path d="M24.1 1V6" stroke="#e4eaee"/><path d="M36.2 1V6" stroke="#e4eaee"/><path d="M48.3 1V6" stroke="#e4eaee"/><path d="M60.4 1V6" stroke="#e4eaee"/><path d="M72.5 1V6" stroke="#e4eaee"/><path d="M84.6 1V6" stroke="#e4eaee"/><path d="M96.7 1V6" stroke="#e4eaee"/><path d="M108.8 1V6" stroke="#e4eaee"/><path d="M120.9 1V6" stroke="#e4eaee"/><path d="M133.0 1V6" stroke="#e4eaee"/><path d="M145.1 1V6" stroke="#e4eaee"/><path d="M157.2 1V6" stroke="#e4eaee"/><path d="M169.3 1V6" stroke="#e4eaee"/><path d="M181.4 1V6" stroke="#e4eaee"/><path d="M193.5 1V6" stroke="#e4eaee"/><path d="M205.6 1V6" stroke="#e4eaee"/><path d="M217.7 1V6" stroke="#e4eaee"/><path d="M229.8 1V6" stroke="#e4eaee"/><path d="M241.9 1V6" stroke="#e4eaee"/><path d="M254.0 1V6" stroke="#e4eaee"/></svg>
<div style="position:absolute;left:1141px;top:566px;width:31px;height:7px;background:linear-gradient(#1a86c8 50%,#0c3a60 50%);border-radius:3px"></div>
<svg style="position:absolute;left:1152px;top:566px;" width="8" height="7" viewBox="0 0 8 7"><path d="M4 0.5L7 3.5L4 6.5L1 3.5Z" fill="#1a86c8" stroke="#0c3a60" stroke-width="0.8"/></svg>
<div style="position:absolute;left:1177px;top:557px;width:61px;height:25px;background:#fff;border:1px solid #b4c0ca;box-sizing:border-box;border-radius:2px"></div>
<div style="position:absolute;left:1225px;top:558px;width:12px;height:23px;background:linear-gradient(#f2f4f6,#dfe4e9);border-left:1px solid #b4c0ca;box-sizing:border-box"></div>
<svg style="position:absolute;left:1226px;top:558px;" width="11" height="23" viewBox="0 0 11 23"><path d="M2.5 8L5.5 4.5L8.5 8Z" fill="#9aa8b4"/><path d="M2.5 15L5.5 18.5L8.5 15Z" fill="#111"/><path d="M0 11.5H11" stroke="#c4ced6"/></svg>
<div class="t" style="left:1181.00px;top:562px;font-size:13.5px;letter-spacing:-0.204px;font-weight:normal;font-style:normal;color:#000;font-family:'Liberation Sans', sans-serif;">100.0</div>
<div style="position:absolute;left:881px;top:178px;width:363px;height:411px;border:1px solid #d0d8de;border-top:none;box-sizing:border-box"></div>
<svg style="position:absolute;left:1051px;top:590px;" width="4" height="4" viewBox="0 0 4 4"><path d="M2 0L4 2L2 4L0 2Z" fill="#0a4a80"/><path d="M0.3 2.2H3.7L2 4Z" fill="#30b0e8"/></svg>
<svg style="position:absolute;left:1059px;top:590px;" width="4" height="4" viewBox="0 0 4 4"><path d="M2 0L4 2L2 4L0 2Z" fill="#0a4a80"/><path d="M0.3 2.2H3.7L2 4Z" fill="#30b0e8"/></svg>
<svg style="position:absolute;left:1068px;top:590px;" width="4" height="4" viewBox="0 0 4 4"><path d="M2 0L4 2L2 4L0 2Z" fill="#0a4a80"/><path d="M0.3 2.2H3.7L2 4Z" fill="#30b0e8"/></svg>
<div style="position:absolute;left:1245px;top:152px;width:1px;height:781px;background:#c5ced6"></div>
<svg style="position:absolute;left:1260px;top:155px;" width="5" height="5" viewBox="0 0 5 5"><path d="M2.5 0L5 2.5L2.5 5L0 2.5Z" fill="#0a5a90"/><path d="M0.5 2.5L5 2.5L2.5 5Z" fill="#22a8e0"/></svg>
<div style="position:absolute;left:1249px;top:165px;width:28px;height:28px;background:linear-gradient(#e2e7ec,#d0d8e0);border:1px solid #aab6c0;box-sizing:border-box;border-radius:4px"></div>
<svg style="position:absolute;left:1251px;top:166px;" width="24" height="26" viewBox="0 0 24 26"><rect x="3" y="4" width="5" height="5" transform="rotate(45 5.5 6.5)" fill="none" stroke="#3030f0" stroke-width="1.3"/><path d="M8 9L16 16" stroke="#111" stroke-width="1.4"/><path d="M13 17L17.5 17.5L17 13Z" fill="#111"/><rect x="17" y="17" width="5" height="5" transform="rotate(45 19.5 19.5)" fill="none" stroke="#30a030" stroke-width="1.3"/></svg>
<div style="position:absolute;left:1254px;top:198px;width:18px;height:1px;background:#d0d8de"></div>
<svg style="position:absolute;left:1253px;top:208px;" width="22" height="22" viewBox="0 0 22 22"><path d="M4 5H19M4 5V20" stroke="#333" stroke-width="1.8" stroke-dasharray="2 1.5"/><rect x="1.5" y="2.5" width="5" height="5" transform="rotate(45 4 5)" fill="#5050f0" stroke="#2020e0"/></svg>
<svg style="position:absolute;left:1253px;top:236px;" width="20" height="20" viewBox="0 0 20 20"><path d="M16.5 2V17.5H2" stroke="#c4c8cc" stroke-width="1.3" stroke-dasharray="2 1.5" fill="none"/></svg>
<svg style="position:absolute;left:1253px;top:264px;" width="20" height="20" viewBox="0 0 20 20"><path d="M16 2V17.5H1" stroke="#c4c8cc" stroke-width="1.3" stroke-dasharray="2 1.5" fill="none"/><circle cx="16" cy="17" r="2.6" fill="#c4c8cc"/></svg>
<svg style="position:absolute;left:1253px;top:294px;" width="20" height="20" viewBox="0 0 20 20"><path d="M15 5V15.5H1" stroke="#c4c8cc" stroke-width="1.3" stroke-dasharray="2 1.5" fill="none"/><path d="M15 1V8" stroke="#c4c8cc" stroke-width="1.3"/><circle cx="15" cy="5" r="2.6" fill="#c4c8cc"/></svg>
<svg style="position:absolute;left:1253px;top:321px;" width="20" height="20" viewBox="0 0 20 20"><path d="M15 2V15.5H1" stroke="#c4c8cc" stroke-width="1.3" stroke-dasharray="2 1.5" fill="none"/><circle cx="5.5" cy="6" r="2" fill="none" stroke="#c4c8cc" stroke-width="1.3"/></svg>
<div style="position:absolute;left:1254px;top:350px;width:18px;height:1px;background:#d0d8de"></div>
<div style="position:absolute;left:1249px;top:357px;width:28px;height:28px;background:linear-gradient(#e2e7ec,#d0d8e0);border:1px solid #aab6c0;box-sizing:border-box;border-radius:4px"></div>
<svg style="position:absolute;left:1251px;top:359px;" width="24" height="24" viewBox="0 0 24 24"><path d="M4 13C5 9 8 6.5 11 7C10 12 14 17 20 20" stroke="#666" stroke-width="1.6" fill="none"/><rect x="10" y="4" width="5" height="5" transform="rotate(45 12.5 6.5)" fill="#c8d0f8" stroke="#2020e0" stroke-width="1.2"/></svg>
<svg style="position:absolute;left:1253px;top:389px;" width="20" height="20" viewBox="0 0 20 20"><path d="M1.5 3C8 4 17 7 17.5 11C18 14 14 16 11 17C12 15 13 13 15 12" stroke="#30a030" stroke-width="1.8" fill="none"/></svg>
<svg style="position:absolute;left:1253px;top:417px;" width="20" height="20" viewBox="0 0 20 20"><path d="M2 18L18 2M3 13L17 8" stroke="#c4c8cc" stroke-width="1.2"/><circle cx="9.5" cy="10.5" r="2.5" fill="#c4c8cc"/></svg>
<svg style="position:absolute;left:1253px;top:445px;" width="20" height="20" viewBox="0 0 20 20"><path d="M1.5 2C8 2 14 6 15 10C15.5 13 13 15 11 16" stroke="#666" stroke-width="1.5" fill="none"/><rect x="7" y="13" width="5" height="5" transform="rotate(45 9.5 15.5)" fill="#5a8a5a" stroke="#20a020" stroke-width="1.2"/></svg>
<svg style="position:absolute;left:1253px;top:472px;" width="20" height="20" viewBox="0 0 20 20"><path d="M1 3C5 3 8 4 10 6C11 9 10 12 13 14C16 15 17 13 17.5 12" stroke="#666" stroke-width="1.5" fill="none"/><path d="M10 6C13 8 17 10 18 12" stroke="#666" stroke-width="1.5" fill="none"/><rect x="8" y="3" width="5" height="5" fill="#5a8a5a" stroke="#20a020" stroke-width="1.2"/></svg>
<svg style="position:absolute;left:1253px;top:499px;" width="20" height="20" viewBox="0 0 20 20"><path d="M2 17L18 3" stroke="#555" stroke-width="1"/><path d="M1.5 14L5.5 18M4.5 11.5L8.5 15.5M11.5 5L15.5 9M14.5 2.5L18.5 6.5" stroke="#e03030" stroke-width="1.4"/><circle cx="10" cy="10" r="2.4" fill="#5a6ab0" stroke="#20a020" stroke-width="1.2"/></svg>
<svg style="position:absolute;left:1253px;top:527px;" width="20" height="20" viewBox="0 0 20 20"><path d="M15.5 3V17.5H1" stroke="#555" stroke-width="1.5" fill="none"/><circle cx="7" cy="9" r="1.8" fill="none" stroke="#30a030" stroke-width="1.4"/></svg>
<svg style="position:absolute;left:1253px;top:555px;" width="20" height="20" viewBox="0 0 20 20"><path d="M16 3V17.5H1" stroke="#333" stroke-width="1.4" stroke-dasharray="2 1.5" fill="none"/><path d="M3 9H11M7 5V13" stroke="#333" stroke-width="1.5"/></svg>
<div style="position:absolute;left:1254px;top:586px;width:18px;height:1px;background:#d0d8de"></div>
<svg style="position:absolute;left:1253px;top:596px;" width="20" height="22" viewBox="0 0 20 22"><defs><linearGradient id="sq" x1="0" y1="0" x2="1" y2="1"><stop offset="0" stop-color="#fff"/><stop offset="1" stop-color="#888"/></linearGradient></defs><rect x="3.5" y="2.5" width="13" height="17" rx="1.5" fill="url(#sq)" stroke="#222" stroke-width="1.4"/></svg>
<div style="position:absolute;left:1249px;top:621px;width:28px;height:27px;background:linear-gradient(#e2e7ec,#d0d8e0);border:1px solid #aab6c0;box-sizing:border-box;border-radius:4px"></div>
<svg style="position:absolute;left:1252px;top:624px;" width="22" height="22" viewBox="0 0 22 22"><path d="M4 2V19M8.5 2V19M13 2V19M17.5 2V19M2 4H20M2 8.5H20M2 13H20M2 17.5H20" stroke="#2020f0" stroke-width="1.5"/></svg>
<div style="position:absolute;left:1249px;top:650px;width:28px;height:27px;background:linear-gradient(#e2e7ec,#d0d8e0);border:1px solid #aab6c0;box-sizing:border-box;border-radius:4px"></div>
<svg style="position:absolute;left:1252px;top:653px;" width="22" height="22" viewBox="0 0 22 22"><path d="M5 3V19M17 3V19M14 3L8 19" stroke="#2020f0" stroke-width="1.6"/></svg>
</body></html>
